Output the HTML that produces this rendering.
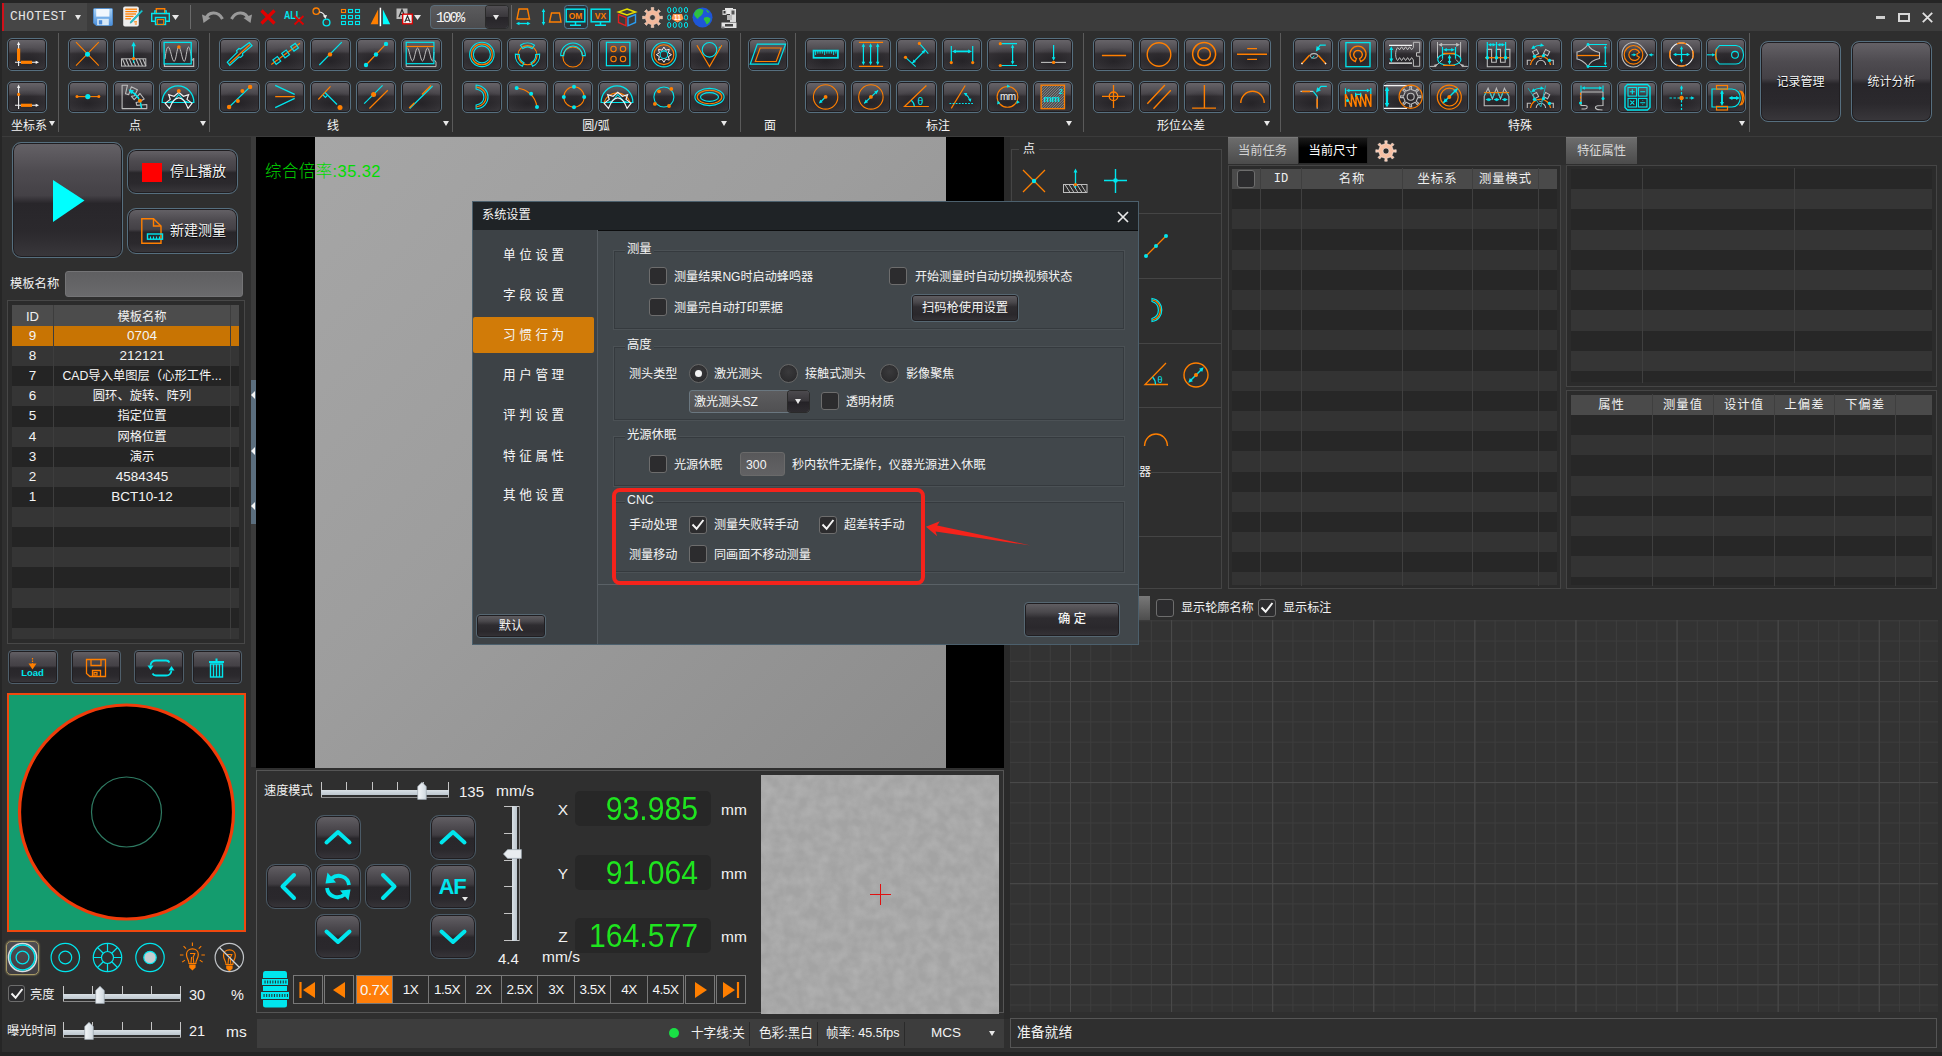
<!DOCTYPE html>
<html lang="zh-CN"><head><meta charset="utf-8"><title>CHOTEST</title>
<style>
*{box-sizing:border-box;margin:0;padding:0}
html,body{width:1942px;height:1056px;overflow:hidden;background:#2e2e2e}
body{font-family:"Liberation Sans","Noto Sans CJK SC",sans-serif;color:#eee;font-size:12px;line-height:1}
#app{position:relative;width:1942px;height:1056px;overflow:hidden;background:#2f2f2f}
.a,.rb,.bb,.t,.cb,.rd,.sep,.row{position:absolute}
.t{white-space:nowrap;color:#f0f0f0}
svg{display:block;overflow:visible}
/* ribbon button */
.rb{width:41px;height:33px;border:1px solid #566f7f;border-radius:5px;
 background:radial-gradient(ellipse 60% 45% at 50% 72%,rgba(20,18,22,.45),rgba(20,18,22,0) 100%),linear-gradient(#69666b 0%,#59565b 20%,#48454a 40%,#343135 48%,#333135 70%,#3b393d 100%);
 box-shadow:inset 0 0 0 1px #201e21}
.rb svg{position:absolute;left:-1px;top:-1px;width:41px;height:33px}
/* bigger glossy buttons */
.bb{border:1px solid #566f7f;border-radius:8px;
 background:linear-gradient(#656267 0%,#4e4b50 25%,#444146 46%,#28262a 53%,#2b292d 78%,#39373b 100%);
 box-shadow:inset 0 0 0 1px #201e21}
.sep{width:1px;background:#5a5a5a}
.glab{position:absolute;top:119px;height:14px;font-size:12px;color:#f4f4f4;text-align:center;white-space:nowrap;line-height:14px}
.tri{position:absolute;width:0;height:0;border-left:4px solid transparent;border-right:4px solid transparent;border-top:6px solid #e8e8e8}
/* checkbox */
.cb{width:18px;height:18px;border:1px solid #6d6d6d;border-radius:3px;background:#2c2c2e}
.cb svg{position:absolute;left:0;top:0;width:16px;height:16px}
.rd{width:19px;height:19px;border:1px solid #666;border-radius:50%;background:radial-gradient(circle at 50% 40%,#3a3a3c,#262628)}
.rd.on::after{content:"";position:absolute;left:5px;top:5px;width:7px;height:7px;border-radius:50%;background:#f2f2f2}
/* tables */
.hd{position:absolute;background:#4c4c4c;color:#f0f0f0;text-align:center;white-space:nowrap}
.vl{position:absolute;width:1px;background:#444}
.fs{position:absolute;border:1px solid #353a3e;box-shadow:0 0 0 1px #4b5155}
.dt{font-size:12.5px;color:#f2f2f2}

</style></head>
<body>
<div id="app">
<div class="a" style="left:0px;top:0px;width:1942px;height:3px;background:#252525"></div>
<div class="a" style="left:0px;top:3px;width:1942px;height:28px;background:#3c3c3c"></div>
<div class="a" style="left:0px;top:3px;width:2px;height:1053px;background:#262626"></div>
<div class="a" style="left:2px;top:3px;width:85px;height:28px;background:#464646"></div>
<div class="a" style="left:2px;top:3px;width:2px;height:28px;background:#d0101a"></div>
<div class="t" style="left:10px;top:9px;font-size:13px;line-height:16px;height:16px;color:#e4e4e4;font-family:'Liberation Mono','DejaVu Sans Mono',monospace;letter-spacing:0.3px;">CHOTEST</div>
<div class="a" style="left:75px;top:15px;width:0;height:0;border-left:3.5px solid transparent;border-right:3.5px solid transparent;border-top:5px solid #e8e8e8"></div>
<svg class="a" style="left:93px;top:8px;" width="20" height="18" viewBox="0 0 20 18"><defs><linearGradient id="gsv" x1="0" y1="0" x2="0" y2="1"><stop offset="0" stop-color="#a9d2f5"/><stop offset="1" stop-color="#4a8fdc"/></linearGradient></defs><path d="M1.5 0.5 H18.5 Q19.5 0.5 19.5 1.5 V16.5 Q19.5 17.5 18.5 17.5 H3 L0.5 15 V1.5 Q0.5 0.5 1.5 0.5 Z" fill="url(#gsv)" stroke="#4d8fd6" stroke-width="0.8"/><rect x="3.2" y="1" width="13.2" height="7.6" fill="#f1f7fd"/><rect x="4.2" y="10.8" width="11.6" height="6.4" fill="#d6e8f6"/><rect x="5.8" y="12.2" width="3.4" height="4.2" fill="#4b8ad6"/></svg>
<svg class="a" style="left:123px;top:6px;" width="21" height="21" viewBox="0 0 21 21"><path d="M2 0.5 H14 Q15.8 0.5 15.8 2.3 V18.7 Q15.8 20.5 14 20.5 H2 Q0.2 20.5 0.2 18.7 V2.3 Q0.2 0.5 2 0.5 Z" fill="#ededed"/><path d="M2.3 3.2 H14" stroke="#ff7f00" stroke-width="1.3"/><path d="M2.3 5.6 H14" stroke="#ff7f00" stroke-width="1.3"/><path d="M2.3 8 H13" stroke="#ff7f00" stroke-width="1.3"/><path d="M2.3 10.4 H10.5" stroke="#ff7f00" stroke-width="1.3"/><path d="M2.3 12.8 H8" stroke="#ff7f00" stroke-width="1.3"/><path d="M11.2 15.8 H14 M11.8 18 H14" stroke="#ff7f00" stroke-width="1.2"/><path d="M7.6 15.6 L18.6 4 L19.8 5.2 L8.8 16.6 L7.2 17.2 Z" fill="#1fc4cc" stroke="#0e8f98" stroke-width="0.5"/></svg>
<svg class="a" style="left:151px;top:7px;" width="19" height="18" viewBox="0 0 19 18"><path d="M5.3 6.5 V1.7 H13.7 V6.5" stroke="#ff7f00" stroke-width="1.4" fill="none" /><path d="M3.8 6.5 V3.8 H5.3 M13.7 3.8 H15.2 V6.5" stroke="#00e6ee" stroke-width="1.3" fill="none" /><path d="M4.5 14.3 H0.7 V6.5 H18.3 V14.3 H14.5" stroke="#00e6ee" stroke-width="1.4" fill="none" /><rect x="4.5" y="10.5" width="10" height="7" stroke="#00e6ee" stroke-width="1.4" fill="none" /><rect x="6.3" y="12.6" width="6.4" height="4.9" stroke="#ff7f00" stroke-width="1" fill="none" /></svg>
<svg class="a" style="left:172px;top:15px;" width="7" height="5" viewBox="0 0 7 5"><path d="M0 0 H7 L3.5 5 Z" fill="#e8e8e8"/></svg>
<svg class="a" style="left:202px;top:10px;" width="22" height="14" viewBox="0 0 22 14"><path d="M3.5 9.5 C6 1.5 16 0.5 20.5 9" stroke="#9a9a9a" stroke-width="3" fill="none"/><path d="M0 4.5 L8.5 8 L1.5 13 Z" fill="#9a9a9a"/></svg>
<svg class="a" style="left:230px;top:10px;" width="22" height="14" viewBox="0 0 22 14"><g transform="translate(22 0) scale(-1 1)"><path d="M3.5 9.5 C6 1.5 16 0.5 20.5 9" stroke="#9a9a9a" stroke-width="3" fill="none"/><path d="M0 4.5 L8.5 8 L1.5 13 Z" fill="#9a9a9a"/></g></svg>
<svg class="a" style="left:260px;top:9px;" width="16" height="16" viewBox="0 0 16 16"><path d="M1.5 1.5 L14.5 14.5 M14.5 1.5 L1.5 14.5" stroke="#e00000" stroke-width="3.2" fill="none"/></svg>
<svg class="a" style="left:284px;top:8px;" width="21" height="18" viewBox="0 0 21 18"><text x="0" y="10.5" font-family="Liberation Sans,sans-serif" font-size="11.5" font-weight="bold" fill="#00e6ee" textLength="17" lengthAdjust="spacingAndGlyphs">ALL</text><path d="M10.5 8 L19.5 16.5 M19.5 8 L10.5 16.5" stroke="#e00000" stroke-width="1.8" fill="none"/></svg>
<svg class="a" style="left:312px;top:7px;" width="20" height="20" viewBox="0 0 20 20"><circle cx="4.2" cy="4.2" r="3.2" stroke="#ff7f00" stroke-width="1.3" fill="none"/><circle cx="14.5" cy="15.5" r="3.4" stroke="#00e6ee" stroke-width="1.4" fill="none"/><path d="M7.5 5 C11 5.5 12.5 7.5 13 10" stroke="#f0f0f0" stroke-width="1.1" fill="none"/><path d="M10.8 8.5 L13.5 12 L15 8 Z" fill="#f0f0f0"/></svg>
<svg class="a" style="left:341px;top:9px;" width="20" height="16" viewBox="0 0 20 16"><rect x="0.5" y="0.5" width="4" height="3" stroke="#ff7f00" stroke-width="1.1" fill="none" /><rect x="7.5" y="0.5" width="4" height="3" stroke="#00e6ee" stroke-width="1.1" fill="none" /><rect x="14.5" y="0.5" width="4" height="3" stroke="#00e6ee" stroke-width="1.1" fill="none" /><rect x="0.5" y="6.5" width="4" height="3" stroke="#00e6ee" stroke-width="1.1" fill="none" /><rect x="7.5" y="6.5" width="4" height="3" stroke="#00e6ee" stroke-width="1.1" fill="none" /><rect x="14.5" y="6.5" width="4" height="3" stroke="#00e6ee" stroke-width="1.1" fill="none" /><rect x="0.5" y="12.5" width="4" height="3" stroke="#00e6ee" stroke-width="1.1" fill="none" /><rect x="7.5" y="12.5" width="4" height="3" stroke="#00e6ee" stroke-width="1.1" fill="none" /><rect x="14.5" y="12.5" width="4" height="3" stroke="#00e6ee" stroke-width="1.1" fill="none" /></svg>
<svg class="a" style="left:370px;top:8px;" width="21" height="18" viewBox="0 0 21 18"><path d="M8.1 1.5 V16.2 H0.6 Z" fill="#ff7f00"/><path d="M12.9 1.5 V16.2 H20.2 Z" fill="#00ffff"/><path d="M10.4 -0.3 V18.2" stroke="#ffffff" stroke-width="1.5"/></svg>
<svg class="a" style="left:396px;top:8px;" width="19" height="17" viewBox="0 0 19 17"><rect x="0.5" y="0.5" width="11" height="10.5" fill="#bdbdbd"/><path d="M3 9 L6 1.5 L9 9 M4 6.5 H8" stroke="#2a2a2a" stroke-width="1.2" fill="none"/><rect x="6.7" y="6.2" width="9.6" height="9.6" fill="#f6f6f6" stroke="#e00000" stroke-width="1.3"/><path d="M8.8 14.3 L11.5 8 L14.2 14.3 M9.8 12.2 H13.2" stroke="#2a2a2a" stroke-width="1.1" fill="none"/></svg>
<svg class="a" style="left:414px;top:15px;" width="7" height="5" viewBox="0 0 7 5"><path d="M0 0 H7 L3.5 5 Z" fill="#e8e8e8"/></svg>
<svg class="a" style="left:516px;top:8px;" width="16" height="18" viewBox="0 0 16 18"><path d="M3 1 H11.5 L13.5 11 H1 Z" stroke="#ff7f00" stroke-width="1.4" fill="none" /><path d="M1.5 15.5 H13" stroke="#00e6ee" stroke-width="1.3" fill="none" /><path d="M0 0 L-3.4499999999999997 -1.7249999999999999 L-3.4499999999999997 1.7249999999999999 Z" fill="#00e6ee" transform="translate(0 15.5) rotate(180)"/><path d="M0 0 L-3.4499999999999997 -1.7249999999999999 L-3.4499999999999997 1.7249999999999999 Z" fill="#00e6ee" transform="translate(14.5 15.5) rotate(0)"/></svg>
<svg class="a" style="left:540px;top:8px;" width="22" height="18" viewBox="0 0 22 18"><path d="M3.5 3 V15" stroke="#00e6ee" stroke-width="1.3" fill="none" /><path d="M0 0 L-3.4499999999999997 -1.7249999999999999 L-3.4499999999999997 1.7249999999999999 Z" fill="#00e6ee" transform="translate(3.5 0.5) rotate(-90)"/><path d="M0 0 L-3.4499999999999997 -1.7249999999999999 L-3.4499999999999997 1.7249999999999999 Z" fill="#00e6ee" transform="translate(3.5 17.5) rotate(90)"/><path d="M11.5 5 H19.5 L21 14 H9.5 Z" stroke="#ff7f00" stroke-width="1.4" fill="none" /></svg>
<svg class="a" style="left:564px;top:5px;" width="24" height="24" viewBox="0 0 24 24"><rect x="0.5" y="0.5" width="23" height="23" rx="3" fill="#2a3238" stroke="#4f7d9a" stroke-width="1"/></svg>
<svg class="a" style="left:565px;top:8px;" width="21" height="18" viewBox="0 0 21 18"><rect x="1.2" y="1.2" width="18.6" height="12.6" stroke="#00e6ee" stroke-width="1.5" fill="none" /><path d="M10.5 14 V17 M5 17.3 H16" stroke="#00e6ee" stroke-width="1.5" fill="none" /><text x="10.5" y="11" text-anchor="middle" font-family="Liberation Sans,sans-serif" font-size="8.5" font-weight="bold" fill="#ff7f00">OM</text></svg>
<svg class="a" style="left:590px;top:8px;" width="21" height="18" viewBox="0 0 21 18"><rect x="1.2" y="1.2" width="18.6" height="12.6" stroke="#00e6ee" stroke-width="1.5" fill="none" /><path d="M10.5 14 V17 M5 17.3 H16" stroke="#00e6ee" stroke-width="1.5" fill="none" /><text x="10.5" y="11" text-anchor="middle" font-family="Liberation Sans,sans-serif" font-size="8.5" font-weight="bold" fill="#ff7f00">VX</text></svg>
<svg class="a" style="left:617px;top:8px;" width="20" height="19" viewBox="0 0 20 19"><path d="M10 1 L18.5 4 L10 7 L1.5 4 Z" stroke="#e8e000" stroke-width="1.5" fill="none" /><path d="M1.5 6.5 V14.5 L9 17.8 V9.5 Z" stroke="#e02020" stroke-width="1.4" fill="none" /><path d="M18.5 6.5 V14.5 L11 17.8 V9.5 Z" stroke="#2a9cf0" stroke-width="1.4" fill="none" /></svg>
<svg class="a" style="left:642px;top:7px;" width="21" height="21" viewBox="0 0 21 21"><path d="M20.4 9.1 L20.4 11.9 L17.7 11.5 L16.3 14.9 L18.5 16.5 L16.5 18.5 L14.9 16.3 L11.5 17.7 L11.9 20.4 L9.1 20.4 L9.5 17.7 L6.1 16.3 L4.5 18.5 L2.5 16.5 L4.7 14.9 L3.3 11.5 L0.6 11.9 L0.6 9.1 L3.3 9.5 L4.7 6.1 L2.5 4.5 L4.5 2.5 L6.1 4.7 L9.5 3.3 L9.1 0.6 L11.9 0.6 L11.5 3.3 L14.9 4.7 L16.5 2.5 L18.5 4.5 L16.3 6.1 L17.7 9.5 Z M13.3 10.5 A2.8 2.8 0 1 0 7.7 10.5 A2.8 2.8 0 1 0 13.3 10.5 Z" fill="#f4b99c" fill-rule="evenodd" stroke="#fde4d6" stroke-width="0.5"/></svg>
<svg class="a" style="left:667px;top:7px;" width="21" height="21" viewBox="0 0 21 21"><ellipse cx="2.2" cy="3.0" rx="1.6" ry="2.6" stroke="#00e6ee" stroke-width="1" fill="none"/><ellipse cx="7.8" cy="3.0" rx="1.6" ry="2.6" stroke="#00e6ee" stroke-width="1" fill="none"/><ellipse cx="13.399999999999999" cy="3.0" rx="1.6" ry="2.6" stroke="#00e6ee" stroke-width="1" fill="none"/><ellipse cx="18.999999999999996" cy="3.0" rx="1.6" ry="2.6" stroke="#00e6ee" stroke-width="1" fill="none"/><ellipse cx="2.2" cy="10.5" rx="1.6" ry="2.6" stroke="#00e6ee" stroke-width="1" fill="none"/><ellipse cx="18.999999999999996" cy="10.5" rx="1.6" ry="2.6" stroke="#00e6ee" stroke-width="1" fill="none"/><ellipse cx="2.2" cy="18.0" rx="1.6" ry="2.6" stroke="#00e6ee" stroke-width="1" fill="none"/><ellipse cx="7.8" cy="18.0" rx="1.6" ry="2.6" stroke="#00e6ee" stroke-width="1" fill="none"/><ellipse cx="13.399999999999999" cy="18.0" rx="1.6" ry="2.6" stroke="#00e6ee" stroke-width="1" fill="none"/><ellipse cx="18.999999999999996" cy="18.0" rx="1.6" ry="2.6" stroke="#00e6ee" stroke-width="1" fill="none"/><path d="M6 7 H15 L16.5 12 L10.5 15.5 L4.5 12 Z" fill="#ff9a50"/><text x="10.5" y="13.3" text-anchor="middle" font-family="Liberation Sans,sans-serif" font-size="6.5" font-weight="bold" fill="#fff">11</text></svg>
<svg class="a" style="left:692px;top:7px;" width="21" height="21" viewBox="0 0 21 21"><circle cx="10.5" cy="10.5" r="10" fill="#1e56d8"/><path d="M5 2.5 C8 1 10.5 2 11.5 3.5 C10.5 5 11.5 6.5 9.5 8 C8.5 10 6.5 9.5 6 12 C4.5 11 2.5 9.5 2 7 C2.5 5 3.5 3.5 5 2.5 Z" fill="#2fc040"/><path d="M12.5 10.5 C14.5 9.5 17 10 18.5 11.5 C18.5 14 17 16 15 17.5 C13.5 16 13.5 14.5 12.5 13.5 C11.5 12.5 11.5 11.5 12.5 10.5 Z" fill="#2fc040"/><path d="M14 3 C15.5 3 17 4.5 17.5 5.5 L15.5 5.5 Z" fill="#2fc040"/></svg>
<svg class="a" style="left:721px;top:7px;" width="17" height="22" viewBox="0 0 17 22"><rect x="4" y="1" width="8" height="6" fill="#e8e8e8"/><rect x="1.5" y="3" width="4" height="5" fill="#d0d0d0"/><rect x="2.5" y="4" width="2" height="2.5" fill="#333"/><rect x="9" y="2" width="6" height="13" fill="#dadada"/><rect x="10.5" y="3.5" width="3" height="4" fill="#555"/><rect x="6" y="8" width="5" height="5" fill="#b8b8b8"/><path d="M0.5 15.5 H15.5 V21 H0.5 Z" fill="#e4e4e4"/><rect x="4" y="17" width="8" height="2.5" fill="#444"/><rect x="0.5" y="19.5" width="3" height="2" fill="#888"/></svg>
<div class="a" style="left:430px;top:5px;width:79px;height:24px;border:1px solid #5a6d7a;border-radius:4px;background:linear-gradient(#5b5b5d,#4b4b4d)"></div>
<div class="a" style="left:486px;top:6px;width:22px;height:22px;border-radius:3px;background:linear-gradient(#504e52 0%,#39373b 49%,#262428 51%,#302e32 100%);box-shadow:0 0 0 1px #2a2a2a"></div>
<div class="a" style="left:493px;top:15px;width:0;height:0;border-left:3.5px solid transparent;border-right:3.5px solid transparent;border-top:5px solid #e8e8e8"></div>
<div class="t" style="left:436px;top:9px;font-size:14.5px;line-height:18px;height:18px;color:#f4f4f4;font-family:'Liberation Mono',monospace;letter-spacing:-1.9px;">100%</div>
<div class="a" style="left:511px;top:5px;width:1px;height:24px;background:#666"></div>
<div class="a" style="left:190px;top:5px;width:1px;height:24px;background:#6a6a6a"></div>
<div class="a" style="left:1876px;top:16px;width:9px;height:3px;background:#cfcfcf"></div>
<div class="a" style="left:1898px;top:13px;width:12px;height:9px;border:2px solid #d8d8d8"></div>
<svg class="a" style="left:1922px;top:12px;" width="11" height="11" viewBox="0 0 11 11"><path d="M0.8 0.8 L10.2 10.2 M10.2 0.8 L0.8 10.2" stroke="#e0e0e0" stroke-width="1.8" fill="none"/></svg>
<div class="a" style="left:2px;top:31px;width:1940px;height:105px;background:#2e2e2e"></div>
<div class="a" style="left:2px;top:136px;width:1940px;height:1px;background:#3b3b3b"></div>
<div class="rb" style="left:7px;top:38px;width:40px;height:33px"><svg viewBox="0 0 41 33"><path d="M11.6 6 V28 M8 24.3 H29.5" stroke="#f2f2f2" stroke-width="1.1" fill="none" /><path d="M0 0 L-3.3000000000000003 -1.6500000000000001 L-3.3000000000000003 1.6500000000000001 Z" fill="#f2f2f2" transform="translate(11.6 3.6) rotate(-90)"/><path d="M0 0 L-3.3000000000000003 -1.6500000000000001 L-3.3000000000000003 1.6500000000000001 Z" fill="#f2f2f2" transform="translate(32 24.3) rotate(0)"/><rect x="10" y="10.5" width="3.2" height="12.5" fill="#ff7f00"/><rect x="14" y="22.7" width="11" height="3.2" fill="#ff7f00"/></svg></div>
<div class="rb" style="left:7px;top:81px;width:40px;height:32px"><svg viewBox="0 0 41 33"><path d="M11.6 6 V28 M8 24.3 H29.5" stroke="#f2f2f2" stroke-width="1.1" fill="none" /><path d="M0 0 L-3.3000000000000003 -1.6500000000000001 L-3.3000000000000003 1.6500000000000001 Z" fill="#f2f2f2" transform="translate(11.6 3.6) rotate(-90)"/><path d="M0 0 L-3.3000000000000003 -1.6500000000000001 L-3.3000000000000003 1.6500000000000001 Z" fill="#f2f2f2" transform="translate(32 24.3) rotate(0)"/><circle cx="11.6" cy="13.4" r="1.6" fill="#ff7f00"/><rect x="14" y="22.7" width="11" height="3.2" fill="#ff7f00"/></svg></div>
<div class="rb" style="left:68px;top:38px;width:40px;height:33px"><svg viewBox="0 0 41 33"><path d="M8 4.2 L30.8 27.6 M30.8 4.2 L8 27.6" stroke="#ff7f00" stroke-width="1.1" fill="none" /><circle cx="19.5" cy="16.2" r="2.5" fill="#00e6ee"/></svg></div>
<div class="rb" style="left:68px;top:81px;width:40px;height:32px"><svg viewBox="0 0 41 33"><path d="M9 15.6 H30.8" stroke="#ff7f00" stroke-width="1.1" fill="none" /><circle cx="9" cy="15.6" r="1.5" fill="#ff7f00"/><circle cx="30.8" cy="15.6" r="1.5" fill="#ff7f00"/><circle cx="19.8" cy="15.6" r="2.6" fill="#00e6ee"/></svg></div>
<div class="rb" style="left:113px;top:38px;width:41px;height:33px"><svg viewBox="0 0 41 33"><rect x="8.5" y="20.8" width="24.3" height="7.3" stroke="#bdbdbd" stroke-width="1" fill="none" /><path d="M9.5 21 L12.5 28 M12.9 21 L15.9 28 M16.3 21 L19.3 28 M19.7 21 L22.7 28 M23.1 21 L26.1 28 M26.5 21 L29.5 28 M29.9 21 L32.9 28 " stroke="#bdbdbd" stroke-width="1.1" fill="none" /><path d="M20.6 7 V24.8" stroke="#00e6ee" stroke-width="1.3" fill="none" /><path d="M0 0 L-4.5 -2.25 L-4.5 2.25 Z" fill="#00e6ee" transform="translate(20.6 3.8) rotate(-90)"/><circle cx="20.6" cy="20.6" r="1.7" fill="#ff7f00"/></svg></div>
<div class="rb" style="left:113px;top:81px;width:41px;height:32px"><svg viewBox="0 0 41 33"><path d="M9.1 4.2 H14.5 L12.5 12.8 L15.7 13.6 L18.3 5.8 L24.4 8.7 L21.6 14.8 L18.4 15.4 L21.2 18.6 L27 12.5 L31.2 18 L26.2 20.8 L23.1 21.5 L23.8 24.4 L33.8 23.5 V27.6 H9.1 Z" stroke="#bdbdbd" stroke-width="1.1" fill="none" stroke-linejoin="round"/><path d="M17.6 10.2 C23 12.5 27.6 18 28.5 27" stroke="#00e6ee" stroke-width="1.6" fill="none" /><path d="M0 0 L-4.800000000000001 -2.4000000000000004 L-4.800000000000001 2.4000000000000004 Z" fill="#00e6ee" transform="translate(15.6 8.6) rotate(214)"/><circle cx="27" cy="19.8" r="2" fill="#ff7f00"/></svg></div>
<div class="rb" style="left:159px;top:38px;width:40px;height:33px"><svg viewBox="0 0 41 33"><path d="M5.4 26 V28.4 H34.7 V20.3" stroke="#bdbdbd" stroke-width="1.1" fill="none" /><path d="M6 21 C7 12 8 9 9.3 9 C11.3 9 13 23.4 15.1 23.4 C17.2 23.4 17.8 9 19.8 9 C21.8 9 23.2 23.4 25.2 23.4 C27.2 23.4 27.5 9 29.5 9 C31 9 32 17 33.2 22.5 L34.7 20.3" stroke="#bdbdbd" stroke-width="1" fill="none" /><rect x="5.1" y="4.4" width="27.1" height="21.5" stroke="#00e6ee" stroke-width="1.3" fill="none" /><circle cx="19.9" cy="9" r="1.8" fill="#ff7f00"/></svg></div>
<div class="rb" style="left:159px;top:81px;width:40px;height:32px"><svg viewBox="0 0 41 33"><path d="M3.1 21.5 A15.9 16.6 0 0 1 34.9 21.5 Z" stroke="#00e6ee" stroke-width="1.2" fill="none" /><path d="M9.5 21.5 L14.2 20 L19.8 13.6 L25.4 20 L30 21.5" stroke="#00e6ee" stroke-width="1.1" fill="none" /><path d="M10.5 27.4 L6.2 22.3 L11.2 18.4 L9.7 13.6 L15.1 15.3 L19.8 11.4 L24.4 15.3 L29.6 13.6 L28 18.4 L33 22.3 L29.1 27.4 C26.5 20.5 23.5 16.9 19.8 16.9 C16 16.9 13 20.5 10.5 27.4 Z" stroke="#f2f2f2" stroke-width="1.2" fill="none" /><circle cx="19.8" cy="9.9" r="1.9" fill="#ff7f00"/></svg></div>
<div class="rb" style="left:219px;top:38px;width:41px;height:33px"><svg viewBox="0 0 41 33"><path d="M8.3 24.2 L18.2 14.3 L17.6 12.6 L20 10.5 L21.5 11 L30.3 4.6 L33 7.6 L23.5 15.5 L23.8 17.3 L21.6 19.4 L20 19 L10.8 27.4 Z" stroke="#00e6ee" stroke-width="1.2" fill="none" /><path d="M10.5 25.5 L31 6.5" stroke="#ff7f00" stroke-width="1.1" fill="none" /></svg></div>
<div class="rb" style="left:219px;top:81px;width:41px;height:32px"><svg viewBox="0 0 41 33"><path d="M10.1 26 L31.1 5.9" stroke="#00e6ee" stroke-width="1.2" fill="none" /><circle cx="10.1" cy="26" r="2.2" fill="#ff7f00"/><circle cx="31.1" cy="5.9" r="2.2" fill="#ff7f00"/><circle cx="18.9" cy="20" r="2" fill="#ff7f00"/><circle cx="23.4" cy="9.9" r="2" fill="#ff7f00"/></svg></div>
<div class="rb" style="left:265px;top:38px;width:40px;height:33px"><svg viewBox="0 0 41 33"><path d="M6.3 26.5 L35 5.2" stroke="#ff7f00" stroke-width="1.1" fill="none" /><rect x="9.0" y="19.599999999999998" width="5.6" height="5.6" stroke="#00e6ee" stroke-width="1.2" fill="none" transform="rotate(-36 11.8 22.4)"/><rect x="17.8" y="13.100000000000001" width="5.6" height="5.6" stroke="#00e6ee" stroke-width="1.2" fill="none" transform="rotate(-36 20.6 15.9)"/><rect x="26.8" y="6.500000000000001" width="5.6" height="5.6" stroke="#00e6ee" stroke-width="1.2" fill="none" transform="rotate(-36 29.6 9.3)"/></svg></div>
<div class="rb" style="left:265px;top:81px;width:40px;height:32px"><svg viewBox="0 0 41 33"><path d="M10.2 4.4 L29.7 13.4 M10.2 26.6 L29.7 17.4" stroke="#00e6ee" stroke-width="1.2" fill="none" /><path d="M10.2 15.6 H29.7" stroke="#ff7f00" stroke-width="1.3" fill="none" /></svg></div>
<div class="rb" style="left:310px;top:38px;width:41px;height:33px"><svg viewBox="0 0 41 33"><path d="M9.3 27 L31.8 4.2" stroke="#00e6ee" stroke-width="1.2" fill="none" /><circle cx="20" cy="16.4" r="2.2" fill="#ff7f00"/></svg></div>
<div class="rb" style="left:310px;top:81px;width:41px;height:32px"><svg viewBox="0 0 41 33"><path d="M8.3 18.5 L20.5 5.3" stroke="#ff7f00" stroke-width="1.2" fill="none" /><path d="M15 11.5 L27 23.5" stroke="#00e6ee" stroke-width="1.2" fill="none" /><path d="M13 14 L15.4 16.4 L17.6 14.2" stroke="#00e6ee" stroke-width="1.1" fill="none" /><circle cx="30" cy="26.5" r="2.5" fill="#ff7f00"/></svg></div>
<div class="rb" style="left:356px;top:38px;width:40px;height:33px"><svg viewBox="0 0 41 33"><path d="M10 27 L30 5.9" stroke="#ff7f00" stroke-width="1.2" fill="none" /><circle cx="10" cy="27" r="2.2" fill="#00e6ee"/><circle cx="20" cy="16.5" r="2.2" fill="#00e6ee"/><circle cx="30" cy="5.9" r="2.2" fill="#00e6ee"/></svg></div>
<div class="rb" style="left:356px;top:81px;width:40px;height:32px"><svg viewBox="0 0 41 33"><path d="M8.2 22.6 L26.6 4.4" stroke="#00e6ee" stroke-width="1.2" fill="none" /><path d="M13.4 27.5 L31.8 9.2" stroke="#ff7f00" stroke-width="1.2" fill="none" /><circle cx="17.6" cy="13.4" r="2.5" fill="#ff7f00"/></svg></div>
<div class="rb" style="left:401px;top:38px;width:41px;height:33px"><svg viewBox="0 0 41 33"><path d="M5.2 26 V28.6 H35 V24 L33.5 22" stroke="#bdbdbd" stroke-width="1" fill="none" /><path d="M6.5 10 C8 10 9.5 23 11.5 23 C13.5 23 14.5 10 16.5 10 C18.5 10 19.5 23 21.5 23 C23.5 23 24.5 10 26.5 10 C28.5 10 29.5 23 31.5 23 C32.2 23 32.5 19 33 14" stroke="#bdbdbd" stroke-width="1" fill="none" /><rect x="5.2" y="4.3" width="27.7" height="21.4" stroke="#00e6ee" stroke-width="1.2" fill="none" /><path d="M5.2 8.5 H32.9" stroke="#ff7f00" stroke-width="1.2" fill="none" /></svg></div>
<div class="rb" style="left:401px;top:81px;width:41px;height:32px"><svg viewBox="0 0 41 33"><path d="M8.7 27.5 L31.6 5" stroke="#00e6ee" stroke-width="1.2" fill="none" /><path d="M8.2 27 L13.5 21.8 M21 13.6 L30 4.6" stroke="#ff7f00" stroke-width="1.4" fill="none" /></svg></div>
<div class="rb" style="left:462px;top:38px;width:40px;height:33px"><svg viewBox="0 0 41 33"><circle cx="19.9" cy="16.4" r="12.2" stroke="#00e6ee" stroke-width="1.1" fill="none"/><circle cx="19.9" cy="16.4" r="10.4" stroke="#ff7f00" stroke-width="1.1" fill="none"/><circle cx="19.9" cy="16.4" r="8.5" stroke="#00e6ee" stroke-width="1.1" fill="none"/></svg></div>
<div class="rb" style="left:462px;top:81px;width:40px;height:32px"><svg viewBox="0 0 41 33"><path d="M14.1 4 C30 5.5 30 26.5 14.1 27.9 V24 C24.5 22 24.5 10 14.1 8 Z" stroke="#00e6ee" stroke-width="1.1" fill="none" /><path d="M14.3 6 C27.3 8 27.3 24 14.3 26" stroke="#ff7f00" stroke-width="1.1" fill="none" /></svg></div>
<div class="rb" style="left:507px;top:38px;width:41px;height:33px"><svg viewBox="0 0 41 33"><circle cx="20.5" cy="17.2" r="9.6" stroke="#ff7f00" stroke-width="1.1" fill="none"/><path d="M13.50 7.21 A12.2 12.2 0 0 1 27.50 7.21 L25.20 10.48 A8.2 8.2 0 0 0 15.80 10.48 Z" stroke="#00e6ee" stroke-width="1.1" fill="none" /><path d="M32.65 16.14 A12.2 12.2 0 0 1 25.66 28.26 L23.97 24.63 A8.2 8.2 0 0 0 28.67 16.49 Z" stroke="#00e6ee" stroke-width="1.1" fill="none" /><path d="M15.34 28.26 A12.2 12.2 0 0 1 8.35 16.14 L12.33 16.49 A8.2 8.2 0 0 0 17.03 24.63 Z" stroke="#00e6ee" stroke-width="1.1" fill="none" /></svg></div>
<div class="rb" style="left:507px;top:81px;width:41px;height:32px"><svg viewBox="0 0 41 33"><path d="M9.7 7 C20 8 28.5 15 30 26.1" stroke="#ff7f00" stroke-width="1.1" fill="none" /><circle cx="9.7" cy="7" r="2" fill="#00e6ee"/><circle cx="24.1" cy="12.8" r="2" fill="#00e6ee"/><circle cx="30" cy="26.1" r="2" fill="#00e6ee"/></svg></div>
<div class="rb" style="left:553px;top:38px;width:40px;height:33px"><svg viewBox="0 0 41 33"><circle cx="19.9" cy="19" r="10" stroke="#ff7f00" stroke-width="1.1" fill="none"/><path d="M7.7 17.6 A12.3 12.6 0 0 1 32.3 17.6 H29.3 A9.3 9.6 0 0 0 10.7 17.6 Z" stroke="#00e6ee" stroke-width="1.1" fill="none" /></svg></div>
<div class="rb" style="left:553px;top:81px;width:40px;height:32px"><svg viewBox="0 0 41 33"><circle cx="21" cy="16" r="10.2" stroke="#ff7f00" stroke-width="1.1" fill="none"/><circle cx="21" cy="5.8" r="2" fill="#00e6ee"/><circle cx="21" cy="26.2" r="2" fill="#00e6ee"/><circle cx="10.8" cy="16" r="2" fill="#00e6ee"/><circle cx="31.2" cy="16" r="2" fill="#00e6ee"/></svg></div>
<div class="rb" style="left:598px;top:38px;width:41px;height:33px"><svg viewBox="0 0 41 33"><rect x="8.4" y="4.3" width="23.5" height="23.4" stroke="#00e6ee" stroke-width="1.2" fill="none" /><circle cx="15.5" cy="11" r="2.7" stroke="#ff7f00" stroke-width="1.1" fill="none"/><circle cx="25" cy="11" r="2.7" stroke="#ff7f00" stroke-width="1.1" fill="none"/><circle cx="15.5" cy="21" r="2.7" stroke="#ff7f00" stroke-width="1.1" fill="none"/><circle cx="25" cy="21" r="2.7" stroke="#ff7f00" stroke-width="1.1" fill="none"/></svg></div>
<div class="rb" style="left:598px;top:81px;width:41px;height:32px"><svg viewBox="0 0 41 33"><path d="M3.1 21.5 A15.9 16.6 0 0 1 34.9 21.5 Z" stroke="#00e6ee" stroke-width="1.2" fill="none" /><path d="M6 21.5 A13.9 14.4 0 0 1 32.2 21.5" stroke="#ff7f00" stroke-width="1.1" fill="none" /><path d="M9.5 21.5 L14.2 20 L19.8 13.6 L25.4 20 L30 21.5" stroke="#00e6ee" stroke-width="1.1" fill="none" /><path d="M10.5 27.4 L6.2 22.3 L11.2 18.4 L9.7 13.6 L15.1 15.3 L19.8 11.4 L24.4 15.3 L29.6 13.6 L28 18.4 L33 22.3 L29.1 27.4 C26.5 20.5 23.5 16.9 19.8 16.9 C16 16.9 13 20.5 10.5 27.4 Z" stroke="#f2f2f2" stroke-width="1.2" fill="none" /></svg></div>
<div class="rb" style="left:644px;top:38px;width:40px;height:33px"><svg viewBox="0 0 41 33"><circle cx="19.9" cy="16.7" r="12.2" stroke="#00e6ee" stroke-width="1.1" fill="none"/><circle cx="19.9" cy="16.7" r="9.9" stroke="#ff7f00" stroke-width="1.1" fill="none"/><path d="M19.90 9.10 L21.78 12.17 L25.27 11.33 L24.43 14.82 L27.50 16.70 L24.43 18.58 L25.27 22.07 L21.78 21.23 L19.90 24.30 L18.02 21.23 L14.53 22.07 L15.37 18.58 L12.30 16.70 L15.37 14.82 L14.53 11.33 L18.02 12.17 Z" stroke="#f2f2f2" stroke-width="1" fill="none" /><circle cx="19.9" cy="16.7" r="3.8" stroke="#00e6ee" stroke-width="1.1" fill="none"/></svg></div>
<div class="rb" style="left:644px;top:81px;width:40px;height:32px"><svg viewBox="0 0 41 33"><circle cx="19.9" cy="16" r="10" stroke="#00e6ee" stroke-width="1.1" fill="none"/><circle cx="15" cy="10.3" r="1.9" fill="#ff7f00"/><circle cx="27.3" cy="7.9" r="1.9" fill="#ff7f00"/><circle cx="10.9" cy="22.9" r="1.9" fill="#ff7f00"/><circle cx="25" cy="25" r="1.9" fill="#ff7f00"/></svg></div>
<div class="rb" style="left:689px;top:38px;width:41px;height:33px"><svg viewBox="0 0 41 33"><path d="M7.9 7.3 L20.5 28.6 L32.8 7.3" stroke="#ff7f00" stroke-width="1.2" fill="none" /><circle cx="20.5" cy="11.8" r="7.3" stroke="#00e6ee" stroke-width="1.1" fill="none"/><path d="M29.5 10 L31.5 8.5" stroke="#00e6ee" stroke-width="1" fill="none" /></svg></div>
<div class="rb" style="left:689px;top:81px;width:41px;height:32px"><svg viewBox="0 0 41 33"><ellipse cx="20.5" cy="16" rx="14.6" ry="8.6" stroke="#00e6ee" stroke-width="1.1" fill="none"/><ellipse cx="20.5" cy="16" rx="12.3" ry="6.7" stroke="#ff7f00" stroke-width="1.1" fill="none"/><ellipse cx="20.5" cy="16" rx="9" ry="4.4" stroke="#00e6ee" stroke-width="1.1" fill="none"/></svg></div>
<div class="rb" style="left:748px;top:38px;width:40px;height:33px"><svg viewBox="0 0 41 33"><path d="M2.2 26.2 L9.3 6.1 H37.6 L30.3 26.2 Z" stroke="#00e6ee" stroke-width="1.2" fill="none" /><path d="M7.3 23.5 L12.1 10 H33.2 L28.2 23.5 Z" stroke="#ff7f00" stroke-width="1.2" fill="none" /></svg></div>
<div class="rb" style="left:805px;top:38px;width:41px;height:33px"><svg viewBox="0 0 41 33"><rect x="8.5" y="12.6" width="24.4" height="7.2" stroke="#00e6ee" stroke-width="1.7" fill="none" /><path d="M10.60 13 V17 M12.85 13 V15.6 M15.10 13 V15.6 M17.35 13 V15.6 M19.60 13 V17 M21.85 13 V15.6 M24.10 13 V15.6 M26.35 13 V15.6 M28.60 13 V17 M30.85 13 V15.6" stroke="#00e6ee" stroke-width="0.9" fill="none" /></svg></div>
<div class="rb" style="left:805px;top:81px;width:41px;height:32px"><svg viewBox="0 0 41 33"><circle cx="20.6" cy="15.9" r="12.2" stroke="#ff7f00" stroke-width="1.1" fill="none"/><path d="M20.6 15.9 L15.8 20.7" stroke="#00e6ee" stroke-width="1.3" fill="none" /><path d="M0 0 L-3.5999999999999996 -1.7999999999999998 L-3.5999999999999996 1.7999999999999998 Z" fill="#00e6ee" transform="translate(13.9 22.6) rotate(135)"/><circle cx="20.6" cy="15.9" r="1.9" fill="#ff7f00"/></svg></div>
<div class="rb" style="left:851px;top:38px;width:40px;height:33px"><svg viewBox="0 0 41 33"><path d="M7.9 4.3 H32.1 M7.9 28.3 H32.1" stroke="#ff7f00" stroke-width="1.2" fill="none" /><path d="M12.4 7.3 V25.3" stroke="#00e6ee" stroke-width="1.2" fill="none" /><path d="M0 0 L-3.4499999999999997 -1.7249999999999999 L-3.4499999999999997 1.7249999999999999 Z" fill="#00e6ee" transform="translate(12.4 5.3) rotate(-90)"/><path d="M0 0 L-3.4499999999999997 -1.7249999999999999 L-3.4499999999999997 1.7249999999999999 Z" fill="#00e6ee" transform="translate(12.4 27.3) rotate(90)"/><path d="M19.6 7.3 V25.3" stroke="#00e6ee" stroke-width="1.2" fill="none" /><path d="M0 0 L-3.4499999999999997 -1.7249999999999999 L-3.4499999999999997 1.7249999999999999 Z" fill="#00e6ee" transform="translate(19.6 5.3) rotate(-90)"/><path d="M0 0 L-3.4499999999999997 -1.7249999999999999 L-3.4499999999999997 1.7249999999999999 Z" fill="#00e6ee" transform="translate(19.6 27.3) rotate(90)"/><path d="M26.7 7.3 V25.3" stroke="#00e6ee" stroke-width="1.2" fill="none" /><path d="M0 0 L-3.4499999999999997 -1.7249999999999999 L-3.4499999999999997 1.7249999999999999 Z" fill="#00e6ee" transform="translate(26.7 5.3) rotate(-90)"/><path d="M0 0 L-3.4499999999999997 -1.7249999999999999 L-3.4499999999999997 1.7249999999999999 Z" fill="#00e6ee" transform="translate(26.7 27.3) rotate(90)"/></svg></div>
<div class="rb" style="left:851px;top:81px;width:40px;height:32px"><svg viewBox="0 0 41 33"><circle cx="19.9" cy="15.9" r="12.2" stroke="#ff7f00" stroke-width="1.1" fill="none"/><path d="M13.2 22.4 L27 9.4" stroke="#00e6ee" stroke-width="1.3" fill="none" /><path d="M0 0 L-3.5999999999999996 -1.7999999999999998 L-3.5999999999999996 1.7999999999999998 Z" fill="#00e6ee" transform="translate(13.2 22.4) rotate(136.70981404414152)"/><path d="M0 0 L-3.5999999999999996 -1.7999999999999998 L-3.5999999999999996 1.7999999999999998 Z" fill="#00e6ee" transform="translate(27 9.4) rotate(-43.29018595585846)"/><circle cx="19.9" cy="15.9" r="1.9" fill="#ff7f00"/></svg></div>
<div class="rb" style="left:896px;top:38px;width:41px;height:33px"><svg viewBox="0 0 41 33"><path d="M23.4 5.4 L32.3 15.6 M9.5 19.3 L19.7 28.6" stroke="#00e6ee" stroke-width="1.1" fill="none" /><path d="M16.3 25.2 L29.3 12" stroke="#00e6ee" stroke-width="1.2" fill="none" /><path d="M0 0 L-3.4499999999999997 -1.7249999999999999 L-3.4499999999999997 1.7249999999999999 Z" fill="#00e6ee" transform="translate(16.3 25.2) rotate(134.56263613247927)"/><path d="M0 0 L-3.4499999999999997 -1.7249999999999999 L-3.4499999999999997 1.7249999999999999 Z" fill="#00e6ee" transform="translate(29.3 12) rotate(-45.43736386752073)"/><circle cx="23.4" cy="5.4" r="1.6" fill="#ff7f00"/><circle cx="9.5" cy="19.3" r="1.6" fill="#ff7f00"/></svg></div>
<div class="rb" style="left:896px;top:81px;width:41px;height:32px"><svg viewBox="0 0 41 33"><path d="M30.4 4.5 L8.5 25.5 H32.9" stroke="#ff7f00" stroke-width="1.2" fill="none" /><path d="M15.2 19.3 C17.3 21 18.3 23 18.4 25.5" stroke="#00e6ee" stroke-width="1.1" fill="none" /><text x="21.5" y="24" font-family="Liberation Sans,sans-serif" font-size="10.5" fill="#00e6ee">θ</text></svg></div>
<div class="rb" style="left:942px;top:38px;width:40px;height:33px"><svg viewBox="0 0 41 33"><path d="M9.3 8 V24.5 M30.7 8 V24.5" stroke="#00e6ee" stroke-width="1.2" fill="none" /><path d="M12 13.4 H28" stroke="#00e6ee" stroke-width="1.8" fill="none" /><path d="M0 0 L-3.9000000000000004 -1.9500000000000002 L-3.9000000000000004 1.9500000000000002 Z" fill="#00e6ee" transform="translate(10 13.4) rotate(180)"/><path d="M0 0 L-3.9000000000000004 -1.9500000000000002 L-3.9000000000000004 1.9500000000000002 Z" fill="#00e6ee" transform="translate(30 13.4) rotate(0)"/><circle cx="9.3" cy="24.6" r="1.6" fill="#ff7f00"/><circle cx="30.7" cy="24.6" r="1.6" fill="#ff7f00"/></svg></div>
<div class="rb" style="left:942px;top:81px;width:40px;height:32px"><svg viewBox="0 0 41 33"><path d="M9.3 27.4 L23.2 4.5" stroke="#ff7f00" stroke-width="1.2" fill="none" /><path d="M7.5 22.5 H32" stroke="#00e6ee" stroke-width="1.1" fill="none" stroke-dasharray="1.8 1.3"/><path d="M23 12.8 C25.5 14.5 27.3 16.8 28.2 19.6" stroke="#00e6ee" stroke-width="1.1" fill="none" /><path d="M0 0 L-3.3000000000000003 -1.6500000000000001 L-3.3000000000000003 1.6500000000000001 Z" fill="#00e6ee" transform="translate(21.6 12) rotate(205)"/><path d="M0 0 L-3.3000000000000003 -1.6500000000000001 L-3.3000000000000003 1.6500000000000001 Z" fill="#00e6ee" transform="translate(28.6 21) rotate(75)"/></svg></div>
<div class="rb" style="left:987px;top:38px;width:41px;height:33px"><svg viewBox="0 0 41 33"><path d="M13.3 5.7 H30 M13.3 27.5 H30" stroke="#00e6ee" stroke-width="1.2" fill="none" /><path d="M25.6 8.4 V24.8" stroke="#00e6ee" stroke-width="1.2" fill="none" /><path d="M0 0 L-3.4499999999999997 -1.7249999999999999 L-3.4499999999999997 1.7249999999999999 Z" fill="#00e6ee" transform="translate(25.6 6.4) rotate(-90)"/><path d="M0 0 L-3.4499999999999997 -1.7249999999999999 L-3.4499999999999997 1.7249999999999999 Z" fill="#00e6ee" transform="translate(25.6 26.8) rotate(90)"/><circle cx="13.3" cy="5.7" r="1.6" fill="#ff7f00"/><circle cx="13.3" cy="27.5" r="1.6" fill="#ff7f00"/></svg></div>
<div class="rb" style="left:987px;top:81px;width:41px;height:32px"><svg viewBox="0 0 41 33"><circle cx="20.5" cy="15.9" r="10.4" stroke="#ff7f00" stroke-width="1.1" fill="none"/><rect x="12" y="11.5" width="17.5" height="8" fill="#333135"/><text x="20.7" y="19" text-anchor="middle" font-family="Liberation Sans,sans-serif" font-size="10" fill="#f2f2f2" letter-spacing="-0.6">mm</text><path d="M0 0 L-3.4499999999999997 -1.7249999999999999 L-3.4499999999999997 1.7249999999999999 Z" fill="#00e6ee" transform="translate(23.4 5.6) rotate(8)"/><path d="M0 0 L-3.4499999999999997 -1.7249999999999999 L-3.4499999999999997 1.7249999999999999 Z" fill="#00e6ee" transform="translate(10.6 19.6) rotate(250)"/><path d="M0 0 L-3.4499999999999997 -1.7249999999999999 L-3.4499999999999997 1.7249999999999999 Z" fill="#00e6ee" transform="translate(29.3 23) rotate(128)"/></svg></div>
<div class="rb" style="left:1033px;top:38px;width:40px;height:33px"><svg viewBox="0 0 41 33"><path d="M8 24.4 H33" stroke="#bdbdbd" stroke-width="1.1" fill="none" /><path d="M20.6 7 V20" stroke="#00e6ee" stroke-width="1.2" fill="none" /><path d="M0 0 L-3.5999999999999996 -1.7999999999999998 L-3.5999999999999996 1.7999999999999998 Z" fill="#00e6ee" transform="translate(20.6 22.8) rotate(90)"/><circle cx="20.6" cy="24.4" r="1.7" fill="#ff7f00"/></svg></div>
<div class="rb" style="left:1033px;top:81px;width:40px;height:32px"><svg viewBox="0 0 41 33"><rect x="8.1" y="4.2" width="23.4" height="23.5" fill="#4a4a4c"/><path d="M8.1 6.8 L10.7 4.2 M8.1 9.4 L13.3 4.2 M8.1 12.0 L15.9 4.2 M8.1 14.6 L18.5 4.2 M8.1 17.2 L21.1 4.2 M8.1 19.8 L23.7 4.2 M8.1 22.4 L26.3 4.2 M8.1 25.0 L28.9 4.2 M8.1 27.6 L31.5 4.2 M10.6 27.7 L31.6 6.7 M13.2 27.7 L31.6 9.3 M15.8 27.7 L31.6 11.9 M18.4 27.7 L31.6 14.5 M21.0 27.7 L31.6 17.1 M23.6 27.7 L31.6 19.7 M26.2 27.7 L31.6 22.3 M28.8 27.7 L31.6 24.9" stroke="#9a9a9a" stroke-width="0.8" fill="none" /><rect x="8.1" y="4.2" width="23.4" height="23.5" stroke="#ff7f00" stroke-width="1.3" fill="none" /><text x="18.5" y="21" text-anchor="middle" font-family="Liberation Sans,sans-serif" font-size="9.5" font-weight="bold" fill="#00e6ee" letter-spacing="-0.5">mm</text><text x="28" y="13" text-anchor="middle" font-family="Liberation Sans,sans-serif" font-size="7" font-weight="bold" fill="#00e6ee">2</text></svg></div>
<div class="rb" style="left:1093px;top:38px;width:41px;height:33px"><svg viewBox="0 0 41 33"><path d="M8.9 17.5 H33.1" stroke="#ff7f00" stroke-width="1.5" fill="none" /></svg></div>
<div class="rb" style="left:1093px;top:81px;width:41px;height:32px"><svg viewBox="0 0 41 33"><path d="M9 15.3 H32 M20.5 4 V27" stroke="#ff7f00" stroke-width="1.3" fill="none" /><circle cx="20.5" cy="15.3" r="4.3" stroke="#ff7f00" stroke-width="1.3" fill="none"/></svg></div>
<div class="rb" style="left:1139px;top:38px;width:40px;height:33px"><svg viewBox="0 0 41 33"><circle cx="20" cy="16.5" r="11.8" stroke="#ff7f00" stroke-width="1.4" fill="none"/></svg></div>
<div class="rb" style="left:1139px;top:81px;width:40px;height:32px"><svg viewBox="0 0 41 33"><path d="M8.3 22.7 L25.9 4.1 M14.5 27.7 L31.8 9.2" stroke="#ff7f00" stroke-width="1.4" fill="none" /></svg></div>
<div class="rb" style="left:1184px;top:38px;width:41px;height:33px"><svg viewBox="0 0 41 33"><circle cx="20.1" cy="16" r="11.5" stroke="#ff7f00" stroke-width="1.5" fill="none"/><circle cx="20.1" cy="16" r="6.3" stroke="#ff7f00" stroke-width="1.5" fill="none"/></svg></div>
<div class="rb" style="left:1184px;top:81px;width:41px;height:32px"><svg viewBox="0 0 41 33"><path d="M20.4 4 V27.1 M8.1 27.1 H32" stroke="#ff7f00" stroke-width="1.4" fill="none" /></svg></div>
<div class="rb" style="left:1231px;top:38px;width:40px;height:33px"><svg viewBox="0 0 41 33"><path d="M16.2 10.6 H26 M6 16.3 H36 M16.2 21.4 H26" stroke="#ff7f00" stroke-width="1.4" fill="none" /></svg></div>
<div class="rb" style="left:1231px;top:81px;width:40px;height:32px"><svg viewBox="0 0 41 33"><path d="M9.8 22 A11.7 11.7 0 0 1 33.2 22" stroke="#ff7f00" stroke-width="1.4" fill="none" /></svg></div>
<div class="rb" style="left:1293px;top:38px;width:40px;height:33px"><svg viewBox="0 0 41 33"><path d="M16.7 17.1 C18.5 14.8 23.3 14.8 25.2 17.2" stroke="#bdbdbd" stroke-width="1" fill="none" /><ellipse cx="21" cy="18" rx="3.6" ry="2.3" stroke="#bdbdbd" stroke-width="0.9" fill="none"/><path d="M21.3 17.8 L18.8 20.6" stroke="#00e6ee" stroke-width="1" fill="none" /><path d="M8.5 26 L16.7 17.1 M33 26 L25.2 17.2" stroke="#ff7f00" stroke-width="1.5" fill="none" /><path d="M8.5 26 L9.4 25 M33 26 L32.1 25" stroke="#f2f2f2" stroke-width="1.5" fill="none" /><path d="M32.8 7.2 H27.2 L24.3 11.2" stroke="#00e6ee" stroke-width="1.2" fill="none" /><path d="M0 0 L-4.800000000000001 -2.4000000000000004 L-4.800000000000001 2.4000000000000004 Z" fill="#00e6ee" transform="translate(22.8 13.4) rotate(126)"/></svg></div>
<div class="rb" style="left:1293px;top:81px;width:40px;height:32px"><svg viewBox="0 0 41 33"><path d="M7.4 10.4 H20.2 M24.2 15.3 V27.8" stroke="#bdbdbd" stroke-width="1.2" fill="none" /><path d="M9 10.4 H17 M24.2 17.7 V26.6" stroke="#ff7f00" stroke-width="1.5" fill="none" /><path d="M20.2 10.4 L24.2 15.3" stroke="#00e6ee" stroke-width="1.2" fill="none" /><path d="M33.8 5.4 H28 L24.6 9.4" stroke="#00e6ee" stroke-width="1.2" fill="none" /><path d="M0 0 L-4.800000000000001 -2.4000000000000004 L-4.800000000000001 2.4000000000000004 Z" fill="#00e6ee" transform="translate(23 11.4) rotate(129)"/></svg></div>
<div class="rb" style="left:1338px;top:38px;width:40px;height:33px"><svg viewBox="0 0 41 33"><rect x="7.9" y="4.6" width="24.1" height="24.1" stroke="#00e6ee" stroke-width="1.3" fill="none" /><path d="M17.3 23.6 A8 8 0 1 1 22.7 23.6 L21.6 20.6 A4.3 4.3 0 1 0 18.4 20.6 Z" stroke="#ff7f00" stroke-width="1.3" fill="none" /><path d="M18.2 12.6 H21.8" stroke="#ff7f00" stroke-width="1.2" fill="none" /></svg></div>
<div class="rb" style="left:1338px;top:81px;width:40px;height:32px"><svg viewBox="0 0 41 33"><path d="M7.5 25.8 V13 L13.4 25.8 V13 L18 25.8 V13 L22.7 25.8 V13 L27.7 25.8 V13 L32.8 25.8 V13" stroke="#ff7f00" stroke-width="1.5" fill="none" /><path d="M7.5 7.2 V13 M32.8 7.2 V13" stroke="#00e6ee" stroke-width="1.2" fill="none" /><path d="M10 9.5 H30.299999999999997" stroke="#00e6ee" stroke-width="1.2" fill="none" /><path d="M0 0 L-3.4499999999999997 -1.7249999999999999 L-3.4499999999999997 1.7249999999999999 Z" fill="#00e6ee" transform="translate(8 9.5) rotate(180)"/><path d="M0 0 L-3.4499999999999997 -1.7249999999999999 L-3.4499999999999997 1.7249999999999999 Z" fill="#00e6ee" transform="translate(32.3 9.5) rotate(0)"/><path d="M17.6 11.8 V15.7 M22.7 11.8 V15.7 M17.6 13.4 H22.7" stroke="#00e6ee" stroke-width="1.1" fill="none" /><circle cx="9.5" cy="19.6" r="1.5" fill="#00e6ee"/></svg></div>
<div class="rb" style="left:1383px;top:38px;width:41px;height:33px"><svg viewBox="0 0 41 33"><path d="M6 7.4 H29 M6 25.2 H29" stroke="#f2f2f2" stroke-width="1.3" fill="none" /><path d="M8.3 10.2 V22.4" stroke="#00e6ee" stroke-width="1.3" fill="none" /><path d="M0 0 L-3.9000000000000004 -1.9500000000000002 L-3.9000000000000004 1.9500000000000002 Z" fill="#00e6ee" transform="translate(8.3 8.2) rotate(-90)"/><path d="M0 0 L-3.9000000000000004 -1.9500000000000002 L-3.9000000000000004 1.9500000000000002 Z" fill="#00e6ee" transform="translate(8.3 24.4) rotate(90)"/><path d="M30.4 4.3 H36.7 V14.7 H33.5 V18.2 H36.7 V28.3 H30.4 V22 L28.6 19.6 L26.6 22.6 L24.6 19.6 L22.6 22.6 L20.6 19.6 L18.6 22.6 L16.6 19.6 L14.6 22.6 C12 20 12 12.5 14.6 9.6 L16.6 11.8 L18.6 8.8 L20.6 11.8 L22.6 8.8 L24.6 11.8 L26.6 8.8 L28.6 11.8 L30.4 9.6 Z" stroke="#bdbdbd" stroke-width="1" fill="none" /></svg></div>
<div class="rb" style="left:1383px;top:81px;width:41px;height:32px"><svg viewBox="0 0 41 33"><path d="M0.9 4.6 H24 M0.9 27.4 H24" stroke="#f2f2f2" stroke-width="1.4" fill="none" /><path d="M4 7.4 V24.6" stroke="#00e6ee" stroke-width="2.2" fill="none" /><path d="M0 0 L-4.5 -2.25 L-4.5 2.25 Z" fill="#00e6ee" transform="translate(4 5.4) rotate(-90)"/><path d="M0 0 L-4.5 -2.25 L-4.5 2.25 Z" fill="#00e6ee" transform="translate(4 26.6) rotate(90)"/><path d="M37.9 14.7 L37.9 16.7 L34.9 16.4 L33.3 20.3 L35.6 22.2 L34.2 23.6 L32.3 21.3 L28.4 22.9 L28.7 25.9 L26.7 25.9 L27.0 22.9 L23.1 21.3 L21.2 23.6 L19.8 22.2 L22.1 20.3 L20.5 16.4 L17.5 16.7 L17.5 14.7 L20.5 15.0 L22.1 11.1 L19.8 9.2 L21.2 7.8 L23.1 10.1 L27.0 8.5 L26.7 5.5 L28.7 5.5 L28.4 8.5 L32.3 10.1 L34.2 7.8 L35.6 9.2 L33.3 11.1 L34.9 15.0 Z" stroke="#bdbdbd" stroke-width="1.1" fill="none" stroke-linejoin="round"/><circle cx="27.7" cy="15.7" r="3.5" stroke="#bdbdbd" stroke-width="1.1" fill="none"/><circle cx="27.7" cy="15.7" r="11.6" stroke="#ff7f00" stroke-width="1.2" fill="none"/></svg></div>
<div class="rb" style="left:1429px;top:38px;width:40px;height:33px"><svg viewBox="0 0 41 33"><path d="M8.5 4 V20.3 M31.6 4 V20.3 M0.9 28.4 H6.3 L13.7 21.5 M38.9 28.4 H33.5 L26.9 21.5" stroke="#bdbdbd" stroke-width="1" fill="none" /><path d="M11.2 6.7 H29" stroke="#bdbdbd" stroke-width="1" fill="none" /><path d="M0 0 L-3.9000000000000004 -1.9500000000000002 L-3.9000000000000004 1.9500000000000002 Z" fill="#bdbdbd" transform="translate(9.2 6.7) rotate(180)"/><path d="M0 0 L-3.9000000000000004 -1.9500000000000002 L-3.9000000000000004 1.9500000000000002 Z" fill="#bdbdbd" transform="translate(31 6.7) rotate(0)"/><path d="M0 0 L-3.3000000000000003 -1.6500000000000001 L-3.3000000000000003 1.6500000000000001 Z" fill="#bdbdbd" transform="translate(8.2 25.9) rotate(-43)"/><path d="M0 0 L-3.3000000000000003 -1.6500000000000001 L-3.3000000000000003 1.6500000000000001 Z" fill="#bdbdbd" transform="translate(31.8 25.9) rotate(223)"/><ellipse cx="20.3" cy="21.5" rx="11.6" ry="6" stroke="#00e6ee" stroke-width="1.1" fill="none"/><path d="M13.5 9 V20.7 M26.5 9 V20.7" stroke="#00e6ee" stroke-width="1.2" fill="none" /><path d="M16.2 11.8 H23.8" stroke="#00e6ee" stroke-width="1.2" fill="none" /><path d="M0 0 L-3.5999999999999996 -1.7999999999999998 L-3.5999999999999996 1.7999999999999998 Z" fill="#00e6ee" transform="translate(14.2 11.8) rotate(180)"/><path d="M0 0 L-3.5999999999999996 -1.7999999999999998 L-3.5999999999999996 1.7999999999999998 Z" fill="#00e6ee" transform="translate(25.8 11.8) rotate(0)"/><path d="M14.1 15.5 H26.1 M14.1 27.4 H26.1" stroke="#ff7f00" stroke-width="1.3" fill="none" /><path d="M20.5 18.6 V24.7" stroke="#00e6ee" stroke-width="1.3" fill="none" /><path d="M0 0 L-3.5999999999999996 -1.7999999999999998 L-3.5999999999999996 1.7999999999999998 Z" fill="#00e6ee" transform="translate(20.5 16.6) rotate(-90)"/><path d="M0 0 L-3.5999999999999996 -1.7999999999999998 L-3.5999999999999996 1.7999999999999998 Z" fill="#00e6ee" transform="translate(20.5 26.7) rotate(90)"/></svg></div>
<div class="rb" style="left:1429px;top:81px;width:40px;height:32px"><svg viewBox="0 0 41 33"><circle cx="20.3" cy="16.1" r="12" stroke="#ff7f00" stroke-width="1.2" fill="none"/><circle cx="20.3" cy="16.1" r="8.9" stroke="#ff7f00" stroke-width="1.2" fill="none"/><path d="M14.3 21.8 L28.6 7.5" stroke="#00e6ee" stroke-width="1.4" fill="none" /><path d="M0 0 L-4.199999999999999 -2.0999999999999996 L-4.199999999999999 2.0999999999999996 Z" fill="#00e6ee" transform="translate(14.3 21.8) rotate(135.0)"/><path d="M0 0 L-4.199999999999999 -2.0999999999999996 L-4.199999999999999 2.0999999999999996 Z" fill="#00e6ee" transform="translate(28.6 7.5) rotate(-45.0)"/><circle cx="20.3" cy="16.1" r="2" fill="#ff7f00"/></svg></div>
<div class="rb" style="left:1476px;top:38px;width:41px;height:33px"><svg viewBox="0 0 41 33"><path d="M11.3 11.4 V28.7 H33.9 V11.4 H29.2 V24.2 H24.5 V11.4 H20.3 V24.2 H15.6 V11.4 Z" stroke="#bdbdbd" stroke-width="1.1" fill="none" /><path d="M11.3 4 V19.5 M20.5 4 V19.5 M29.6 4 V19.5" stroke="#00e6ee" stroke-width="1.2" fill="none" /><path d="M13.8 6.7 H18" stroke="#00e6ee" stroke-width="1.2" fill="none" /><path d="M0 0 L-3.4499999999999997 -1.7249999999999999 L-3.4499999999999997 1.7249999999999999 Z" fill="#00e6ee" transform="translate(11.8 6.7) rotate(180)"/><path d="M0 0 L-3.4499999999999997 -1.7249999999999999 L-3.4499999999999997 1.7249999999999999 Z" fill="#00e6ee" transform="translate(20 6.7) rotate(0)"/><path d="M23 6.7 H27.1" stroke="#00e6ee" stroke-width="1.2" fill="none" /><path d="M0 0 L-3.4499999999999997 -1.7249999999999999 L-3.4499999999999997 1.7249999999999999 Z" fill="#00e6ee" transform="translate(21 6.7) rotate(180)"/><path d="M0 0 L-3.4499999999999997 -1.7249999999999999 L-3.4499999999999997 1.7249999999999999 Z" fill="#00e6ee" transform="translate(29.1 6.7) rotate(0)"/><path d="M9 19.7 H33.1" stroke="#ff7f00" stroke-width="1.3" fill="none" /><circle cx="11.3" cy="19.7" r="1.7" fill="#00e6ee"/><circle cx="20.5" cy="19.7" r="1.7" fill="#00e6ee"/><circle cx="29.6" cy="19.7" r="1.7" fill="#00e6ee"/></svg></div>
<div class="rb" style="left:1476px;top:81px;width:41px;height:32px"><svg viewBox="0 0 41 33"><path d="M8.2 24.7 V15.3 L12.1 7.2 L16.4 17.7 L20.4 7.2 L24.5 17.7 L28.4 7.2 L32.9 15.3 V24.7 Z" stroke="#bdbdbd" stroke-width="1.1" fill="none" /><path d="M8.1 11.6 H33.1" stroke="#ff7f00" stroke-width="1.3" fill="none" /><path d="M10 11.6 L8.6 14.5 M14 11.6 L16 16.5 M18.8 11.6 L16.9 16.5 M22 11.6 L24 16.5 M26.8 11.6 L25 16.5 M30.8 11.6 L32.4 14.5" stroke="#18c4cc" stroke-width="1" fill="none" /><path d="M11.4 18.6 H14" stroke="#00e6ee" stroke-width="1.2" fill="none" /><path d="M0 0 L-3.3000000000000003 -1.6500000000000001 L-3.3000000000000003 1.6500000000000001 Z" fill="#00e6ee" transform="translate(9.4 18.6) rotate(180)"/><path d="M0 0 L-3.3000000000000003 -1.6500000000000001 L-3.3000000000000003 1.6500000000000001 Z" fill="#00e6ee" transform="translate(16 18.6) rotate(0)"/><path d="M19.5 18.6 H21.8" stroke="#00e6ee" stroke-width="1.2" fill="none" /><path d="M0 0 L-3.3000000000000003 -1.6500000000000001 L-3.3000000000000003 1.6500000000000001 Z" fill="#00e6ee" transform="translate(17.5 18.6) rotate(180)"/><path d="M0 0 L-3.3000000000000003 -1.6500000000000001 L-3.3000000000000003 1.6500000000000001 Z" fill="#00e6ee" transform="translate(23.8 18.6) rotate(0)"/><path d="M27.7 18.6 H29.9" stroke="#00e6ee" stroke-width="1.2" fill="none" /><path d="M0 0 L-3.3000000000000003 -1.6500000000000001 L-3.3000000000000003 1.6500000000000001 Z" fill="#00e6ee" transform="translate(25.7 18.6) rotate(180)"/><path d="M0 0 L-3.3000000000000003 -1.6500000000000001 L-3.3000000000000003 1.6500000000000001 Z" fill="#00e6ee" transform="translate(31.9 18.6) rotate(0)"/></svg></div>
<div class="rb" style="left:1522px;top:38px;width:40px;height:33px"><svg viewBox="0 0 41 33"><path d="M5.3 27 V22.2 H9 M31.3 27 V22.2 H27.6" stroke="#bdbdbd" stroke-width="1.1" fill="none" /><path d="M14.2 27 A4.7 4.7 0 0 1 23.6 27" stroke="#bdbdbd" stroke-width="1.1" fill="none" /><rect x="11.3" y="12.3" width="4.6" height="4.6" stroke="#bdbdbd" stroke-width="1" fill="none" transform="rotate(-28 13.6 14.6)"/><rect x="22.3" y="12.3" width="4.6" height="4.6" stroke="#bdbdbd" stroke-width="1" fill="none" transform="rotate(28 24.6 14.6)"/><path d="M17 19.5 L18.5 21 L20 19.5" stroke="#bdbdbd" stroke-width="1" fill="none" /><path d="M8.4 27 A10.2 10.2 0 0 1 28.6 27" stroke="#ff7f00" stroke-width="1.3" fill="none" /><path d="M11 9.8 C14 7.6 17.5 7 20 7.4" stroke="#00e6ee" stroke-width="1.2" fill="none" /><path d="M0 0 L-3.75 -1.875 L-3.75 1.875 Z" fill="#00e6ee" transform="translate(9.3 11) rotate(145)"/><path d="M0 0 L-3.75 -1.875 L-3.75 1.875 Z" fill="#00e6ee" transform="translate(22.2 7.8) rotate(12)"/><circle cx="12.5" cy="18.4" r="1.7" fill="#00e6ee"/><circle cx="21.5" cy="17.6" r="1.7" fill="#00e6ee"/><circle cx="27.4" cy="22.4" r="1.7" fill="#00e6ee"/></svg></div>
<div class="rb" style="left:1522px;top:81px;width:40px;height:32px"><svg viewBox="0 0 41 33"><path d="M5.3 27 V22.2 H9 M31.3 27 V22.2 H27.6" stroke="#bdbdbd" stroke-width="1.1" fill="none" /><path d="M14.2 27 A4.7 4.7 0 0 1 23.6 27" stroke="#bdbdbd" stroke-width="1.1" fill="none" /><rect x="11.3" y="12.3" width="4.6" height="4.6" stroke="#bdbdbd" stroke-width="1" fill="none" transform="rotate(-28 13.6 14.6)"/><rect x="22.3" y="12.3" width="4.6" height="4.6" stroke="#bdbdbd" stroke-width="1" fill="none" transform="rotate(28 24.6 14.6)"/><path d="M17 19.5 L18.5 21 L20 19.5" stroke="#bdbdbd" stroke-width="1" fill="none" /><path d="M8.4 27 A10.2 10.2 0 0 1 28.6 27" stroke="#ff7f00" stroke-width="1.3" fill="none" /><path d="M11 9.8 C14 7.6 17.5 7 20 7.4" stroke="#00e6ee" stroke-width="1.2" fill="none" /><path d="M0 0 L-3.75 -1.875 L-3.75 1.875 Z" fill="#00e6ee" transform="translate(9.3 11) rotate(145)"/><path d="M0 0 L-3.75 -1.875 L-3.75 1.875 Z" fill="#00e6ee" transform="translate(22.2 7.8) rotate(12)"/><path d="M6.1 7.2 L18.9 25.8 L23.6 4.5" stroke="#18b4bc" stroke-width="1" fill="none" /><circle cx="12.5" cy="18.4" r="1.7" fill="#00e6ee"/><circle cx="21.5" cy="17.6" r="1.7" fill="#00e6ee"/><circle cx="27.4" cy="22.4" r="1.7" fill="#00e6ee"/></svg></div>
<div class="rb" style="left:1571px;top:38px;width:41px;height:33px"><svg viewBox="0 0 41 33"><path d="M17 6.5 C18.5 10 21.5 13 28.5 14.5 V20.5 C21.5 22 18.5 25 17 28.5 C13 23 8 21 6 21 V14 C8 14 13 12 17 6.5 Z" stroke="#bdbdbd" stroke-width="1.1" fill="none" /><path d="M6 17.5 H28" stroke="#ff7f00" stroke-width="1.3" fill="none" /><path d="M17 6.5 H36 M17 28.5 H36" stroke="#00e6ee" stroke-width="1.1" fill="none" /><path d="M34.3 9.2 V25.8" stroke="#00e6ee" stroke-width="1.1" fill="none" /><path d="M0 0 L-3.0 -1.5 L-3.0 1.5 Z" fill="#00e6ee" transform="translate(34.3 7.2) rotate(-90)"/><path d="M0 0 L-3.0 -1.5 L-3.0 1.5 Z" fill="#00e6ee" transform="translate(34.3 27.8) rotate(90)"/><circle cx="17" cy="6.5" r="1.4" fill="#00e6ee"/><circle cx="17" cy="28.5" r="1.4" fill="#00e6ee"/></svg></div>
<div class="rb" style="left:1571px;top:81px;width:41px;height:32px"><svg viewBox="0 0 41 33"><path d="M10 4.5 V11 M32 4.5 V11" stroke="#00e6ee" stroke-width="1.1" fill="none" /><path d="M12.5 7 H29.5" stroke="#00e6ee" stroke-width="1.2" fill="none" /><path d="M0 0 L-3.3000000000000003 -1.6500000000000001 L-3.3000000000000003 1.6500000000000001 Z" fill="#00e6ee" transform="translate(10.5 7) rotate(180)"/><path d="M0 0 L-3.3000000000000003 -1.6500000000000001 L-3.3000000000000003 1.6500000000000001 Z" fill="#00e6ee" transform="translate(31.5 7) rotate(0)"/><path d="M10 11 V24.5 H14 C17 24.5 17 27.5 14 28 H10.5 M32 11 V24.5 C28 24.5 24 24.5 24.5 27 C25 29 28 28.5 31.5 29 M10 11 H32" stroke="#bdbdbd" stroke-width="1.1" fill="none" /><path d="M9.5 12 V24" stroke="#ff7f00" stroke-width="1.1" fill="none" stroke-dasharray="2 1.5"/><circle cx="9.5" cy="22" r="1.5" fill="#00e6ee"/><circle cx="32" cy="17.5" r="1.5" fill="#00e6ee"/></svg></div>
<div class="rb" style="left:1617px;top:38px;width:40px;height:33px"><svg viewBox="0 0 41 33"><path d="M16.5 4.5 C24 4.5 28 12 30.5 17 C28 22 24 29 16.5 29 C9.5 29 5 23.5 5 16.8 C5 10 9.5 4.5 16.5 4.5 Z" stroke="#bdbdbd" stroke-width="1.1" fill="none" /><circle cx="16.5" cy="16.8" r="9.3" stroke="#ff7f00" stroke-width="1.2" fill="none"/><path d="M22.5 14.5 A5.6 5.6 0 1 0 22.5 19.2 L20 17.8 L20 15.8 Z" stroke="#ff7f00" stroke-width="1.2" fill="none" /><path d="M14.5 16.8 H18" stroke="#00e6ee" stroke-width="1.1" fill="none" /><path d="M0 0 L-3.0 -1.5 L-3.0 1.5 Z" fill="#00e6ee" transform="translate(19.5 16.8) rotate(0)"/><path d="M36.5 16.8 H34" stroke="#00e6ee" stroke-width="1.1" fill="none" /><path d="M0 0 L-3.3000000000000003 -1.6500000000000001 L-3.3000000000000003 1.6500000000000001 Z" fill="#00e6ee" transform="translate(31.5 16.8) rotate(180)"/></svg></div>
<div class="rb" style="left:1617px;top:81px;width:40px;height:32px"><svg viewBox="0 0 41 33"><path d="M10.5 3.5 H30.5 L33 6 V26.5 L30.5 29 H10.5 L8 26.5 V6 Z" stroke="#00e6ee" stroke-width="1.4" fill="none" /><rect x="11" y="6.5" width="8.6" height="8.6" stroke="#00e6ee" stroke-width="1.1" fill="none" /><rect x="21.4" y="6.5" width="8.6" height="8.6" stroke="#00e6ee" stroke-width="1.1" fill="none" /><rect x="11" y="17.4" width="8.6" height="8.6" stroke="#00e6ee" stroke-width="1.1" fill="none" /><rect x="21.4" y="17.4" width="8.6" height="8.6" stroke="#00e6ee" stroke-width="1.1" fill="none" /><path d="M12.8 10.8 H17.8 M15.3 8.3 V13.3 M23.2 10.8 H28.2 M13.3 19.7 L17.3 23.7 M17.3 19.7 L13.3 23.7 M23.2 21.7 H28.2 M25.7 19.4 V20 M25.7 23.4 V24" stroke="#00e6ee" stroke-width="1.1" fill="none" /></svg></div>
<div class="rb" style="left:1661px;top:38px;width:41px;height:33px"><svg viewBox="0 0 41 33"><circle cx="20.5" cy="16.5" r="11.6" stroke="#f2f2f2" stroke-width="1.1" fill="none"/><path d="M16 5.8 A11.6 11.6 0 0 1 25 5.8 M16 27.2 A11.6 11.6 0 0 0 25 27.2" stroke="#ff7f00" stroke-width="1.4" fill="none" /><path d="M9.3 12.5 A11.6 11.6 0 0 0 9.3 20.5 M31.7 12.5 A11.6 11.6 0 0 1 31.7 20.5" stroke="#ff7f00" stroke-width="1.4" fill="none" /><path d="M14 16.5 H27" stroke="#00e6ee" stroke-width="1.2" fill="none" /><path d="M0 0 L-3.3000000000000003 -1.6500000000000001 L-3.3000000000000003 1.6500000000000001 Z" fill="#00e6ee" transform="translate(12 16.5) rotate(180)"/><path d="M0 0 L-3.3000000000000003 -1.6500000000000001 L-3.3000000000000003 1.6500000000000001 Z" fill="#00e6ee" transform="translate(29 16.5) rotate(0)"/><path d="M20.5 10 V23" stroke="#00e6ee" stroke-width="1.2" fill="none" /><path d="M0 0 L-3.3000000000000003 -1.6500000000000001 L-3.3000000000000003 1.6500000000000001 Z" fill="#00e6ee" transform="translate(20.5 8) rotate(-90)"/><path d="M0 0 L-3.3000000000000003 -1.6500000000000001 L-3.3000000000000003 1.6500000000000001 Z" fill="#00e6ee" transform="translate(20.5 25) rotate(90)"/></svg></div>
<div class="rb" style="left:1661px;top:81px;width:41px;height:32px"><svg viewBox="0 0 41 33"><path d="M8.5 17 H31 M20.5 7 V29" stroke="#00e6ee" stroke-width="1.2" fill="none" stroke-dasharray="2.4 1.6"/><path d="M0 0 L-3.3000000000000003 -1.6500000000000001 L-3.3000000000000003 1.6500000000000001 Z" fill="#00e6ee" transform="translate(33.5 17) rotate(0)"/><path d="M0 0 L-3.3000000000000003 -1.6500000000000001 L-3.3000000000000003 1.6500000000000001 Z" fill="#00e6ee" transform="translate(20.5 4.2) rotate(-90)"/><circle cx="20.5" cy="17" r="2.2" fill="#ff7f00"/></svg></div>
<div class="rb" style="left:1706px;top:38px;width:40px;height:33px"><svg viewBox="0 0 41 33"><path d="M13.5 7.5 H30 C40 8 40 25.5 30 26 H13.5 L10 22 V11.5 Z" stroke="#00e6ee" stroke-width="1.1" fill="none" /><circle cx="29" cy="16.8" r="3.4" stroke="#00e6ee" stroke-width="1.1" fill="none"/><path d="M1 16.8 H7" stroke="#00e6ee" stroke-width="1.1" fill="none" /><path d="M0 0 L-3.3000000000000003 -1.6500000000000001 L-3.3000000000000003 1.6500000000000001 Z" fill="#00e6ee" transform="translate(9.5 16.8) rotate(0)"/><path d="M11 11 C9.3 14.5 9.3 19 11 22.5" stroke="#ff7f00" stroke-width="1.3" fill="none" /></svg></div>
<div class="rb" style="left:1706px;top:81px;width:40px;height:32px"><svg viewBox="0 0 41 33"><path d="M6 8 H26 C37 8.5 37 25.5 26 26 H6 Z" stroke="#00e6ee" stroke-width="1.2" fill="none" /><rect x="10.5" y="4.5" width="11" height="3.6" stroke="#ff7f00" stroke-width="1.2" fill="none" /><rect x="10.5" y="25.4" width="11" height="3.6" stroke="#ff7f00" stroke-width="1.2" fill="none" /><path d="M16 10.8 V23" stroke="#00e6ee" stroke-width="1.9" fill="none" /><path d="M0 0 L-3.9000000000000004 -1.9500000000000002 L-3.9000000000000004 1.9500000000000002 Z" fill="#00e6ee" transform="translate(16 8.8) rotate(-90)"/><path d="M0 0 L-3.9000000000000004 -1.9500000000000002 L-3.9000000000000004 1.9500000000000002 Z" fill="#00e6ee" transform="translate(16 25) rotate(90)"/><path d="M24.5 17 H32" stroke="#00e6ee" stroke-width="1.9" fill="none" /><path d="M0 0 L-3.9000000000000004 -1.9500000000000002 L-3.9000000000000004 1.9500000000000002 Z" fill="#00e6ee" transform="translate(22.5 17) rotate(180)"/><path d="M0 0 L-3.9000000000000004 -1.9500000000000002 L-3.9000000000000004 1.9500000000000002 Z" fill="#00e6ee" transform="translate(34 17) rotate(0)"/><path d="M33.5 9.5 C37.5 13 37.5 21 33.5 24.5 M35.5 10 C39 13.5 39 20.5 35.5 24" stroke="#ff7f00" stroke-width="1.2" fill="none" /></svg></div>
<div class="sep" style="left:58px;top:33px;height:99px"></div>
<div class="sep" style="left:209px;top:33px;height:99px"></div>
<div class="sep" style="left:452px;top:33px;height:99px"></div>
<div class="sep" style="left:740px;top:33px;height:99px"></div>
<div class="sep" style="left:795px;top:33px;height:99px"></div>
<div class="sep" style="left:1083px;top:33px;height:99px"></div>
<div class="sep" style="left:1280px;top:33px;height:99px"></div>
<div class="sep" style="left:1749px;top:33px;height:99px"></div>
<div class="glab" style="left:-11px;width:80px">坐标系</div>
<div class="glab" style="left:95px;width:80px">点</div>
<div class="glab" style="left:293px;width:80px">线</div>
<div class="glab" style="left:556px;width:80px">圆/弧</div>
<div class="glab" style="left:730px;width:80px">面</div>
<div class="glab" style="left:898px;width:80px">标注</div>
<div class="glab" style="left:1141px;width:80px">形位公差</div>
<div class="glab" style="left:1480px;width:80px">特殊</div>
<div class="a" style="left:49px;top:121px;width:0;height:0;border-left:3.0px solid transparent;border-right:3.0px solid transparent;border-top:5px solid #e8e8e8"></div>
<div class="a" style="left:200px;top:121px;width:0;height:0;border-left:3.0px solid transparent;border-right:3.0px solid transparent;border-top:5px solid #e8e8e8"></div>
<div class="a" style="left:443px;top:121px;width:0;height:0;border-left:3.0px solid transparent;border-right:3.0px solid transparent;border-top:5px solid #e8e8e8"></div>
<div class="a" style="left:721px;top:121px;width:0;height:0;border-left:3.0px solid transparent;border-right:3.0px solid transparent;border-top:5px solid #e8e8e8"></div>
<div class="a" style="left:1066px;top:121px;width:0;height:0;border-left:3.0px solid transparent;border-right:3.0px solid transparent;border-top:5px solid #e8e8e8"></div>
<div class="a" style="left:1264px;top:121px;width:0;height:0;border-left:3.0px solid transparent;border-right:3.0px solid transparent;border-top:5px solid #e8e8e8"></div>
<div class="a" style="left:1739px;top:121px;width:0;height:0;border-left:3.0px solid transparent;border-right:3.0px solid transparent;border-top:5px solid #e8e8e8"></div>
<div class="bb" style="left:1760px;top:41px;width:81px;height:81px;"><div class="t" style="left:0;top:32px;width:79px;text-align:center;font-size:12px;line-height:16px;color:#f4f4f4;text-shadow:0 1px 1px #000">记录管理</div></div>
<div class="bb" style="left:1851px;top:41px;width:81px;height:81px;"><div class="t" style="left:0;top:32px;width:79px;text-align:center;font-size:12px;line-height:16px;color:#f4f4f4;text-shadow:0 1px 1px #000">统计分析</div></div>
<div class="a" style="left:2px;top:137px;width:249px;height:919px;background:#2f2f2f"></div>
<div class="a" style="left:251px;top:137px;width:5px;height:630px;background:#3b3b3b"></div>
<div class="a" style="left:251px;top:380px;width:5px;height:144px;background:#5b6e7e"></div>
<div class="a" style="left:251px;top:391px;width:0;height:0;border-top:4px solid transparent;border-bottom:4px solid transparent;border-right:4px solid #f4f4f4"></div>
<div class="a" style="left:251px;top:447px;width:0;height:0;border-top:4px solid transparent;border-bottom:4px solid transparent;border-right:4px solid #f4f4f4"></div>
<div class="a" style="left:251px;top:502px;width:0;height:0;border-top:4px solid transparent;border-bottom:4px solid transparent;border-right:4px solid #f4f4f4"></div>
<div class="bb" style="left:12px;top:142px;width:111px;height:116px;border-radius:9px"><svg class="a" style="left:40px;top:37px" width="32" height="42" viewBox="0 0 32 42"><path d="M0 0 L31.5 20.5 L0 42 Z" fill="#00ffff"/></svg></div>
<div class="bb" style="left:127px;top:149px;width:111px;height:45px;border-radius:9px"><div class="a" style="left:14px;top:13px;width:20px;height:19px;background:#ff0000"></div><div class="t" style="left:42px;top:12px;font-size:14px;line-height:18px;color:#f6f6f6;text-shadow:0 1px 1px #000">停止播放</div></div>
<div class="bb" style="left:127px;top:208px;width:111px;height:46px;border-radius:9px"><svg class="a" style="left:13px;top:9px;" width="24" height="28" viewBox="0 0 24 28"><path d="M0.8 0.8 H12.5 L20 8 V25.3 H0.8 Z" stroke="#ff7f00" stroke-width="1.4" fill="none" /><path d="M12.5 0.8 V8 H20" stroke="#ff7f00" stroke-width="1.4" fill="none" /><rect x="6.5" y="16" width="15" height="5.2" stroke="#00e6ee" stroke-width="1.4" fill="none" /><path d="M9.5 18.5 V21 M12.5 18.5 V21 M15.5 18.5 V21 M18.5 18.5 V21" stroke="#00e6ee" stroke-width="1.1" fill="none" /></svg><div class="t" style="left:42px;top:12px;font-size:14px;line-height:18px;color:#f6f6f6;text-shadow:0 1px 1px #000">新建测量</div></div>
<div class="t" style="left:10px;top:276px;font-size:12.3px;line-height:17px;height:17px;color:#f2f2f2;">模板名称</div>
<div class="a" style="left:65px;top:271px;width:178px;height:26px;border-radius:3px;background:linear-gradient(#5f5f61,#6a6a6c);border:1px solid #747476"></div>
<div class="a" style="left:7px;top:300px;width:238px;height:344px;border:1px solid #474747;background:#2b2b2b"></div>
<div class="a" style="left:12px;top:305px;width:227px;height:21px;background:#4c4c4c"></div>
<div class="t" style="left:12px;top:308px;font-size:13px;line-height:17px;height:17px;color:#f0f0f0;width:41px;text-align:center;">ID</div>
<div class="t" style="left:54px;top:309px;font-size:12.3px;line-height:17px;height:17px;color:#f0f0f0;width:176px;text-align:center;">模板名称</div>
<div class="a" style="left:12px;top:326px;width:227px;height:20px;background:#c87403"></div>
<div class="t" style="left:12px;top:327px;font-size:13.5px;line-height:18px;height:18px;color:#f4f4f4;width:41px;text-align:center;">9</div>
<div class="t" style="left:54px;top:327px;font-size:13.5px;line-height:18px;height:18px;color:#f4f4f4;width:176px;text-align:center;">0704</div>
<div class="a" style="left:12px;top:346px;width:227px;height:20px;background:#353535"></div>
<div class="t" style="left:12px;top:347px;font-size:13.5px;line-height:18px;height:18px;color:#f4f4f4;width:41px;text-align:center;">8</div>
<div class="t" style="left:54px;top:347px;font-size:13.5px;line-height:18px;height:18px;color:#f4f4f4;width:176px;text-align:center;">212121</div>
<div class="a" style="left:12px;top:366px;width:227px;height:20px;background:#242424"></div>
<div class="t" style="left:12px;top:367px;font-size:13.5px;line-height:18px;height:18px;color:#f4f4f4;width:41px;text-align:center;">7</div>
<div class="t" style="left:54px;top:367px;font-size:12.3px;line-height:18px;height:18px;color:#f4f4f4;width:176px;text-align:center;">CAD导入单图层（心形工件...</div>
<div class="a" style="left:12px;top:386px;width:227px;height:20px;background:#353535"></div>
<div class="t" style="left:12px;top:387px;font-size:13.5px;line-height:18px;height:18px;color:#f4f4f4;width:41px;text-align:center;">6</div>
<div class="t" style="left:54px;top:387px;font-size:12.3px;line-height:18px;height:18px;color:#f4f4f4;width:176px;text-align:center;">圆环、旋转、阵列</div>
<div class="a" style="left:12px;top:406px;width:227px;height:21px;background:#242424"></div>
<div class="t" style="left:12px;top:407px;font-size:13.5px;line-height:18px;height:18px;color:#f4f4f4;width:41px;text-align:center;">5</div>
<div class="t" style="left:54px;top:407px;font-size:12.3px;line-height:18px;height:18px;color:#f4f4f4;width:176px;text-align:center;">指定位置</div>
<div class="a" style="left:12px;top:427px;width:227px;height:20px;background:#353535"></div>
<div class="t" style="left:12px;top:428px;font-size:13.5px;line-height:18px;height:18px;color:#f4f4f4;width:41px;text-align:center;">4</div>
<div class="t" style="left:54px;top:428px;font-size:12.3px;line-height:18px;height:18px;color:#f4f4f4;width:176px;text-align:center;">网格位置</div>
<div class="a" style="left:12px;top:447px;width:227px;height:20px;background:#242424"></div>
<div class="t" style="left:12px;top:448px;font-size:13.5px;line-height:18px;height:18px;color:#f4f4f4;width:41px;text-align:center;">3</div>
<div class="t" style="left:54px;top:448px;font-size:12.3px;line-height:18px;height:18px;color:#f4f4f4;width:176px;text-align:center;">演示</div>
<div class="a" style="left:12px;top:467px;width:227px;height:20px;background:#353535"></div>
<div class="t" style="left:12px;top:468px;font-size:13.5px;line-height:18px;height:18px;color:#f4f4f4;width:41px;text-align:center;">2</div>
<div class="t" style="left:54px;top:468px;font-size:13.5px;line-height:18px;height:18px;color:#f4f4f4;width:176px;text-align:center;">4584345</div>
<div class="a" style="left:12px;top:487px;width:227px;height:20px;background:#242424"></div>
<div class="t" style="left:12px;top:488px;font-size:13.5px;line-height:18px;height:18px;color:#f4f4f4;width:41px;text-align:center;">1</div>
<div class="t" style="left:54px;top:488px;font-size:13.5px;line-height:18px;height:18px;color:#f4f4f4;width:176px;text-align:center;">BCT10-12</div>
<div class="a" style="left:12px;top:507px;width:227px;height:20px;background:#353535"></div>
<div class="a" style="left:12px;top:527px;width:227px;height:20px;background:#242424"></div>
<div class="a" style="left:12px;top:547px;width:227px;height:20px;background:#353535"></div>
<div class="a" style="left:12px;top:567px;width:227px;height:21px;background:#242424"></div>
<div class="a" style="left:12px;top:588px;width:227px;height:20px;background:#353535"></div>
<div class="a" style="left:12px;top:608px;width:227px;height:20px;background:#242424"></div>
<div class="a" style="left:12px;top:628px;width:227px;height:11px;background:#353535"></div>
<div class="a" style="left:53px;top:305px;width:1px;height:334px;background:#3d3d3d"></div>
<div class="a" style="left:230px;top:305px;width:1px;height:334px;background:#3d3d3d"></div>
<div class="bb" style="left:8px;top:650px;width:50px;height:34px;border-radius:4px;border-color:#4f5f6b;"><svg class="a" style="left:0px;top:0px;" width="48" height="32" viewBox="0 0 48 32"><path d="M23.5 7 V13" stroke="#ff7f00" stroke-width="1.2" stroke-dasharray="1.5 1"/><path d="M19.5 12.5 H27.5 L23.5 18.5 Z" fill="#ff7f00"/><text x="23.5" y="25" text-anchor="middle" font-family="Liberation Sans,sans-serif" font-size="9.5" font-weight="bold" fill="#00e6ee">Load</text></svg></div>
<div class="bb" style="left:71px;top:650px;width:50px;height:34px;border-radius:4px;border-color:#4f5f6b;"><svg class="a" style="left:0px;top:0px;" width="48" height="32" viewBox="0 0 48 32"><path d="M14.5 8.5 H33.5 V25.5 H18 L14.5 22.5 Z" stroke="#ff7f00" stroke-width="1.3" fill="none" /><path d="M19 8.5 V14.5 H29 V8.5" stroke="#ff7f00" stroke-width="1.3" fill="none" /><path d="M20.5 25.5 V19.5 H28.5 V25.5" stroke="#ff7f00" stroke-width="1.3" fill="none" /><rect x="22" y="21.5" width="3" height="2.5" stroke="#ff7f00" stroke-width="1.2" fill="none" /></svg></div>
<div class="bb" style="left:134px;top:650px;width:50px;height:34px;border-radius:4px;border-color:#4f5f6b;"><svg class="a" style="left:0px;top:0px;" width="48" height="32" viewBox="0 0 48 32"><path d="M15.5 14.5 C16 10.5 18 9.5 21 9.5 H31 C33 9.5 34 10.5 34.5 11.5" stroke="#00e6ee" stroke-width="1.8" fill="none" /><path d="M36.5 19.5 C36 23.5 34 24.5 31 24.5 H21 C19 24.5 18 23.5 17.5 22.5" stroke="#00e6ee" stroke-width="1.8" fill="none" /><path d="M12.5 14.5 H18.5 L15.5 19 Z" fill="#00e6ee"/><path d="M33.5 19.5 H39.5 L36.5 15 Z" fill="#00e6ee"/></svg></div>
<div class="bb" style="left:192px;top:650px;width:50px;height:34px;border-radius:4px;border-color:#4f5f6b;"><svg class="a" style="left:0px;top:0px;" width="48" height="32" viewBox="0 0 48 32"><path d="M16 11 H31" stroke="#00e6ee" stroke-width="2" fill="none" /><path d="M23.5 7.5 V10" stroke="#00e6ee" stroke-width="2" fill="none" /><rect x="17.5" y="13" width="12" height="13" stroke="#00e6ee" stroke-width="1.4" fill="none" /><path d="M20.5 13 V26 M23.5 13 V26 M26.5 13 V26" stroke="#00e6ee" stroke-width="1.3" fill="none" /></svg></div>
<div class="a" style="left:7px;top:693px;width:239px;height:239px;background:#149c6e;border:2px solid #f0480e"></div>
<svg class="a" style="left:7px;top:693px;" width="239" height="239" viewBox="0 0 239 239"><circle cx="119.5" cy="119" r="107" fill="#000" stroke="#f03c0a" stroke-width="3.2"/><circle cx="119.5" cy="119" r="35" fill="none" stroke="#2e7a62" stroke-width="1.2"/></svg>
<div class="a" style="left:6px;top:941px;width:33px;height:34px;border:1px solid #a89a66;border-radius:5px;background:linear-gradient(#504e52,#403e42);box-shadow:0 0 2px #c8b878"></div>
<svg class="a" style="left:6px;top:941px;" width="32" height="32" viewBox="0 0 32 32"><circle cx="16.5" cy="16.5" r="14" stroke="#d8dde0" stroke-width="1.6" fill="none"/><circle cx="16.5" cy="16.5" r="12.4" stroke="#00e6ee" stroke-width="1.5" fill="none"/><circle cx="16.5" cy="16.5" r="6.4" stroke="#00e6ee" stroke-width="1.3" fill="none"/></svg>
<svg class="a" style="left:49px;top:941px;" width="32" height="32" viewBox="0 0 32 32"><circle cx="16.3" cy="16.5" r="14.2" stroke="#00e6ee" stroke-width="1.2" fill="none"/><circle cx="16.3" cy="16.5" r="6.4" stroke="#00e6ee" stroke-width="1.2" fill="none"/></svg>
<svg class="a" style="left:91px;top:941px;" width="32" height="32" viewBox="0 0 32 32"><circle cx="16.5" cy="16.5" r="14.2" stroke="#00e6ee" stroke-width="1.2" fill="none"/><circle cx="16.5" cy="16.5" r="6" stroke="#00e6ee" stroke-width="1.2" fill="none"/><path d="M22.50 16.50 L30.70 16.50 M20.74 20.74 L26.54 26.54 M16.50 22.50 L16.50 30.70 M12.26 20.74 L6.46 26.54 M10.50 16.50 L2.30 16.50 M12.26 12.26 L6.46 6.46 M16.50 10.50 L16.50 2.30 M20.74 12.26 L26.54 6.46 " stroke="#00e6ee" stroke-width="1.2" fill="none" /></svg>
<svg class="a" style="left:134px;top:941px;" width="32" height="32" viewBox="0 0 32 32"><circle cx="16" cy="16.5" r="14.2" stroke="#00e6ee" stroke-width="1.2" fill="none"/><circle cx="16" cy="16.5" r="6.2" stroke="#00e6ee" stroke-width="1.2" fill="#c6ccd0"/></svg>
<svg class="a" style="left:176px;top:941px;" width="32" height="32" viewBox="0 0 32 32"><path d="M13 22.5 C13 19 10.5 17.5 10.5 13.5 C10.5 10 13 7.8 16.4 7.8 C19.8 7.8 22.3 10 22.3 13.5 C22.3 17.5 19.8 19 19.8 22.5 Z" stroke="#ff7f00" stroke-width="1.2" fill="none" /><path d="M14 12.5 H18.8 L17.2 16 L17.8 22 M15.6 16 L15 22" stroke="#ff7f00" stroke-width="1.1" fill="none" /><path d="M13.2 23.5 H19.6 V26.5 L16.4 29.5 L13.2 26.5 Z" fill="#ff7f00"/><path d="M16.40 5.00 L16.40 1.50 M22.76 7.64 L25.24 5.16 M10.04 7.64 L7.56 5.16 M25.40 14.00 L28.90 14.00 M7.40 14.00 L3.90 14.00 M23.77 19.16 L26.64 21.17 M9.03 19.16 L6.16 21.17 " stroke="#ff7f00" stroke-width="1.1" fill="none" /></svg>
<svg class="a" style="left:213px;top:941px;" width="32" height="32" viewBox="0 0 32 32"><g transform="translate(0 1)"><path d="M13 22.5 C13 19 10.5 17.5 10.5 13.5 C10.5 10 13 7.8 16.4 7.8 C19.8 7.8 22.3 10 22.3 13.5 C22.3 17.5 19.8 19 19.8 22.5 Z" stroke="#ff7f00" stroke-width="1.2" fill="none" /><path d="M14 12.5 H18.8 L17.2 16 L17.8 22 M15.6 16 L15 22" stroke="#ff7f00" stroke-width="1.1" fill="none" /><path d="M13.2 23.5 H19.6 V26.5 L16.4 29.5 L13.2 26.5 Z" fill="#ff7f00"/></g><circle cx="16.3" cy="16.5" r="14.2" stroke="#c0c4c8" stroke-width="1.2" fill="none"/><path d="M6.5 6.5 L26.5 26.5" stroke="#d0d4d8" stroke-width="1.3" fill="none" /></svg>
<div class="cb" style="left:8px;top:985px;width:17px;height:17px;"><svg viewBox="0 0 16 16"><path d="M3.2 8.2 L6.6 11.8 L12.8 3.8" fill="none" stroke="#f4f4f4" stroke-width="2" stroke-linecap="square"/></svg></div>
<div class="t" style="left:30px;top:987px;font-size:12.3px;line-height:17px;height:17px;color:#f2f2f2;">亮度</div>
<div class="a" style="left:63px;top:986px;width:1px;height:16px;background:#c4c4c4"></div><div class="a" style="left:92px;top:986px;width:1px;height:8px;background:#c4c4c4"></div><div class="a" style="left:122px;top:986px;width:1px;height:8px;background:#c4c4c4"></div><div class="a" style="left:151px;top:986px;width:1px;height:8px;background:#c4c4c4"></div><div class="a" style="left:180px;top:986px;width:1px;height:16px;background:#c4c4c4"></div><div class="a" style="left:63px;top:1001px;width:118px;height:1px;background:#8c8c8c"></div><div class="a" style="left:63px;top:994px;width:118px;height:5px;background:linear-gradient(#d9e0e5,#bcc6ce)"></div><svg class="a" style="left:95px;top:986px;" width="10" height="18" viewBox="0 0 10 18"><defs><linearGradient id="gth" x1="0" y1="0" x2="1" y2="0"><stop offset="0" stop-color="#f4f7f9"/><stop offset="1" stop-color="#cfd8df"/></linearGradient></defs><path d="M5 0.3 L9.3 4.5 L9.3 17.4 L0.7 17.4 L0.7 4.5 Z" fill="url(#gth)" stroke="#9aa4ac" stroke-width="0.7"/></svg>
<div class="t" style="left:189px;top:986px;font-size:14.5px;line-height:19px;height:19px;color:#f2f2f2;">30</div>
<div class="t" style="left:231px;top:986px;font-size:14.5px;line-height:19px;height:19px;color:#f2f2f2;">%</div>
<div class="t" style="left:7px;top:1023px;font-size:12.3px;line-height:17px;height:17px;color:#f2f2f2;">曝光时间</div>
<div class="a" style="left:63px;top:1022px;width:1px;height:16px;background:#c4c4c4"></div><div class="a" style="left:92px;top:1022px;width:1px;height:8px;background:#c4c4c4"></div><div class="a" style="left:122px;top:1022px;width:1px;height:8px;background:#c4c4c4"></div><div class="a" style="left:151px;top:1022px;width:1px;height:8px;background:#c4c4c4"></div><div class="a" style="left:180px;top:1022px;width:1px;height:16px;background:#c4c4c4"></div><div class="a" style="left:63px;top:1037px;width:118px;height:1px;background:#8c8c8c"></div><div class="a" style="left:63px;top:1030px;width:118px;height:5px;background:linear-gradient(#d9e0e5,#bcc6ce)"></div><svg class="a" style="left:84px;top:1022px;" width="10" height="18" viewBox="0 0 10 18"><defs><linearGradient id="gth" x1="0" y1="0" x2="1" y2="0"><stop offset="0" stop-color="#f4f7f9"/><stop offset="1" stop-color="#cfd8df"/></linearGradient></defs><path d="M5 0.3 L9.3 4.5 L9.3 17.4 L0.7 17.4 L0.7 4.5 Z" fill="url(#gth)" stroke="#9aa4ac" stroke-width="0.7"/></svg>
<div class="t" style="left:189px;top:1022px;font-size:14.5px;line-height:19px;height:19px;color:#f2f2f2;">21</div>
<div class="t" style="left:226px;top:1022px;font-size:15.5px;line-height:19px;height:19px;color:#f2f2f2;">ms</div>
<div class="a" style="left:256px;top:137px;width:748px;height:631px;background:#000"></div>
<div class="a" style="left:315px;top:137px;width:631px;height:631px;background:linear-gradient(135deg,#a6a6a6 0%,#9d9d9d 45%,#8c8c8c 100%)"></div>
<div class="t" style="left:265px;top:161px;font-size:16.5px;line-height:20px;height:20px;color:#00dc00;letter-spacing:0.4px;font-weight:300;">综合倍率:35.32</div>
<div class="a" style="left:1004px;top:137px;width:6px;height:882px;background:#2a2a2a"></div>
<div class="a" style="left:256px;top:770px;width:748px;height:243px;border:1px solid #555;background:#2f2f2f"></div>
<div class="t" style="left:264px;top:783px;font-size:12.2px;line-height:16px;height:16px;color:#f2f2f2;">速度模式</div>
<div class="a" style="left:321px;top:782px;width:1px;height:16px;background:#c4c4c4"></div><div class="a" style="left:346px;top:782px;width:1px;height:8px;background:#c4c4c4"></div><div class="a" style="left:372px;top:782px;width:1px;height:8px;background:#c4c4c4"></div><div class="a" style="left:397px;top:782px;width:1px;height:8px;background:#c4c4c4"></div><div class="a" style="left:423px;top:782px;width:1px;height:8px;background:#c4c4c4"></div><div class="a" style="left:448px;top:782px;width:1px;height:16px;background:#c4c4c4"></div><div class="a" style="left:321px;top:797px;width:128px;height:1px;background:#8c8c8c"></div><div class="a" style="left:321px;top:790px;width:128px;height:5px;background:linear-gradient(#d9e0e5,#bcc6ce)"></div><svg class="a" style="left:417px;top:782px;" width="10" height="18" viewBox="0 0 10 18"><defs><linearGradient id="gth" x1="0" y1="0" x2="1" y2="0"><stop offset="0" stop-color="#f4f7f9"/><stop offset="1" stop-color="#cfd8df"/></linearGradient></defs><path d="M5 0.3 L9.3 4.5 L9.3 17.4 L0.7 17.4 L0.7 4.5 Z" fill="url(#gth)" stroke="#9aa4ac" stroke-width="0.7"/></svg>
<div class="t" style="left:459px;top:782px;font-size:15px;line-height:19px;height:19px;color:#f2f2f2;">135</div>
<div class="t" style="left:496px;top:781px;font-size:15.5px;line-height:19px;height:19px;color:#f2f2f2;">mm/s</div>
<div class="bb" style="left:315px;top:815px;width:46px;height:45px;border-radius:9px;border-color:#4a5a66;background:linear-gradient(#636065 0%,#4c494e 28%,#403d42 44%,#29272b 52%,#2a282c 78%,#37353a 100%)"><svg class="a" style="left:0px;top:0px;" width="44" height="43" viewBox="0 0 44 43"><path d="M10.5 26.5 L22 16 L33.5 26.5" stroke="#00e6ee" stroke-width="4" fill="none" stroke-linecap="round" stroke-linejoin="round"/></svg></div>
<div class="bb" style="left:266px;top:864px;width:46px;height:45px;border-radius:9px;border-color:#4a5a66;background:linear-gradient(#636065 0%,#4c494e 28%,#403d42 44%,#29272b 52%,#2a282c 78%,#37353a 100%)"><svg class="a" style="left:0px;top:0px;" width="44" height="43" viewBox="0 0 44 43"><path d="M27 10 L15.5 21.5 L27 33" stroke="#00e6ee" stroke-width="4" fill="none" stroke-linecap="round" stroke-linejoin="round"/></svg></div>
<div class="bb" style="left:315px;top:864px;width:46px;height:45px;border-radius:9px;border-color:#4a5a66;background:linear-gradient(#636065 0%,#4c494e 28%,#403d42 44%,#29272b 52%,#2a282c 78%,#37353a 100%)"><svg class="a" style="left:0px;top:0px;" width="44" height="43" viewBox="0 0 44 43"><g transform="translate(44 0) scale(-1 1)"><path d="M11 20 C12 11.5 22 8 28.5 13.5" stroke="#00e6ee" stroke-width="3.8" fill="none" /><path d="M24 17.5 L34.5 18.5 L32.5 7.5 Z" fill="#00e6ee"/><path d="M33 23 C32 31.5 22 35 15.5 29.5" stroke="#00e6ee" stroke-width="3.8" fill="none" /><path d="M20 25.5 L9.5 24.5 L11.5 35.5 Z" fill="#00e6ee"/></g></svg></div>
<div class="bb" style="left:365px;top:864px;width:46px;height:45px;border-radius:9px;border-color:#4a5a66;background:linear-gradient(#636065 0%,#4c494e 28%,#403d42 44%,#29272b 52%,#2a282c 78%,#37353a 100%)"><svg class="a" style="left:0px;top:0px;" width="44" height="43" viewBox="0 0 44 43"><path d="M17 10 L28.5 21.5 L17 33" stroke="#00e6ee" stroke-width="4" fill="none" stroke-linecap="round" stroke-linejoin="round"/></svg></div>
<div class="bb" style="left:315px;top:914px;width:46px;height:45px;border-radius:9px;border-color:#4a5a66;background:linear-gradient(#636065 0%,#4c494e 28%,#403d42 44%,#29272b 52%,#2a282c 78%,#37353a 100%)"><svg class="a" style="left:0px;top:0px;" width="44" height="43" viewBox="0 0 44 43"><path d="M10.5 16.5 L22 27 L33.5 16.5" stroke="#00e6ee" stroke-width="4" fill="none" stroke-linecap="round" stroke-linejoin="round"/></svg></div>
<div class="bb" style="left:430px;top:815px;width:46px;height:45px;border-radius:9px;border-color:#4a5a66;background:linear-gradient(#636065 0%,#4c494e 28%,#403d42 44%,#29272b 52%,#2a282c 78%,#37353a 100%)"><svg class="a" style="left:0px;top:0px;" width="44" height="43" viewBox="0 0 44 43"><path d="M10.5 26.5 L22 16 L33.5 26.5" stroke="#00e6ee" stroke-width="4" fill="none" stroke-linecap="round" stroke-linejoin="round"/></svg></div>
<div class="bb" style="left:430px;top:864px;width:46px;height:45px;border-radius:9px;border-color:#4a5a66;background:linear-gradient(#636065 0%,#4c494e 28%,#403d42 44%,#29272b 52%,#2a282c 78%,#37353a 100%)"><svg class="a" style="left:0px;top:0px;" width="44" height="43" viewBox="0 0 44 43"><text x="21" y="29" text-anchor="middle" font-family="Liberation Sans,sans-serif" font-size="22" font-weight="bold" fill="#00e6ee" letter-spacing="-1.2">AF</text><path d="M31 32 H37 L34 36 Z" fill="#e8e8e8"/></svg></div>
<div class="bb" style="left:430px;top:914px;width:46px;height:45px;border-radius:9px;border-color:#4a5a66;background:linear-gradient(#636065 0%,#4c494e 28%,#403d42 44%,#29272b 52%,#2a282c 78%,#37353a 100%)"><svg class="a" style="left:0px;top:0px;" width="44" height="43" viewBox="0 0 44 43"><path d="M10.5 16.5 L22 27 L33.5 16.5" stroke="#00e6ee" stroke-width="4" fill="none" stroke-linecap="round" stroke-linejoin="round"/></svg></div>
<div class="a" style="left:504px;top:806px;width:16px;height:1px;background:#c4c4c4"></div>
<div class="a" style="left:504px;top:833px;width:8px;height:1px;background:#c4c4c4"></div>
<div class="a" style="left:504px;top:860px;width:8px;height:1px;background:#c4c4c4"></div>
<div class="a" style="left:504px;top:886px;width:8px;height:1px;background:#c4c4c4"></div>
<div class="a" style="left:504px;top:913px;width:8px;height:1px;background:#c4c4c4"></div>
<div class="a" style="left:504px;top:940px;width:16px;height:1px;background:#c4c4c4"></div>
<div class="a" style="left:519px;top:806px;width:1px;height:135px;background:#8c8c8c"></div>
<div class="a" style="left:512px;top:806px;width:5px;height:135px;background:linear-gradient(90deg,#d9e0e5,#bcc6ce)"></div>
<svg class="a" style="left:503px;top:849px;" width="19" height="10" viewBox="0 0 19 10"><path d="M0.4 5 L4.6 0.6 L18.4 0.6 L18.4 9.4 L4.6 9.4 Z" fill="#e9edf0" stroke="#9aa4ac" stroke-width="0.7"/></svg>
<div class="t" style="left:498px;top:949px;font-size:15px;line-height:19px;height:19px;color:#f2f2f2;">4.4</div>
<div class="t" style="left:542px;top:947px;font-size:15.5px;line-height:19px;height:19px;color:#f2f2f2;">mm/s</div>
<div class="a" style="left:575px;top:791px;width:136px;height:35px;background:#272727;border-radius:5px"></div>
<div class="t" style="left:555px;top:800px;font-size:15.5px;line-height:19px;height:19px;color:#f2f2f2;width:16px;text-align:center;">X</div>
<div class="t" style="left:575px;top:790px;font-size:33.5px;line-height:38px;height:38px;color:#1fe41f;width:136px;text-align:right;transform:scaleX(0.9);transform-origin:123px 50%;padding-right:13px;">93.985</div>
<div class="t" style="left:721px;top:800px;font-size:15.5px;line-height:19px;height:19px;color:#f2f2f2;">mm</div>
<div class="a" style="left:575px;top:855px;width:136px;height:35px;background:#272727;border-radius:5px"></div>
<div class="t" style="left:555px;top:864px;font-size:15.5px;line-height:19px;height:19px;color:#f2f2f2;width:16px;text-align:center;">Y</div>
<div class="t" style="left:575px;top:854px;font-size:33.5px;line-height:38px;height:38px;color:#1fe41f;width:136px;text-align:right;transform:scaleX(0.9);transform-origin:123px 50%;padding-right:13px;">91.064</div>
<div class="t" style="left:721px;top:864px;font-size:15.5px;line-height:19px;height:19px;color:#f2f2f2;">mm</div>
<div class="a" style="left:575px;top:918px;width:136px;height:35px;background:#272727;border-radius:5px"></div>
<div class="t" style="left:555px;top:927px;font-size:15.5px;line-height:19px;height:19px;color:#f2f2f2;width:16px;text-align:center;">Z</div>
<div class="t" style="left:575px;top:917px;font-size:33.5px;line-height:38px;height:38px;color:#1fe41f;width:136px;text-align:right;transform:scaleX(0.9);transform-origin:123px 50%;padding-right:13px;">164.577</div>
<div class="t" style="left:721px;top:927px;font-size:15.5px;line-height:19px;height:19px;color:#f2f2f2;">mm</div>
<svg class="a" style="left:261px;top:970px;" width="28" height="38" viewBox="0 0 28 38"><path d="M4 1 H24 Q26 1 26 3.5 V8 H2 V3.5 Q2 1 4 1 Z" fill="#00e6ee"/><rect x="1" y="9" width="26" height="6" fill="#00e6ee"/><rect x="2" y="16" width="24" height="5" fill="#00e6ee"/><rect x="0" y="22" width="28" height="7" fill="#00e6ee"/><path d="M2 30 H26 V35 Q26 37.5 23.5 37.5 H4.5 Q2 37.5 2 35 Z" fill="#00e6ee"/><rect x="3.5" y="10.5" width="1.1" height="3" fill="#1c3a3c"/><rect x="6.1" y="10.5" width="1.1" height="3" fill="#1c3a3c"/><rect x="8.7" y="10.5" width="1.1" height="3" fill="#1c3a3c"/><rect x="11.3" y="10.5" width="1.1" height="3" fill="#1c3a3c"/><rect x="13.9" y="10.5" width="1.1" height="3" fill="#1c3a3c"/><rect x="16.5" y="10.5" width="1.1" height="3" fill="#1c3a3c"/><rect x="19.1" y="10.5" width="1.1" height="3" fill="#1c3a3c"/><rect x="21.7" y="10.5" width="1.1" height="3" fill="#1c3a3c"/><rect x="24.3" y="10.5" width="1.1" height="3" fill="#1c3a3c"/><rect x="2.5" y="24" width="1.1" height="3" fill="#1c3a3c"/><rect x="5.1" y="24" width="1.1" height="3" fill="#1c3a3c"/><rect x="7.7" y="24" width="1.1" height="3" fill="#1c3a3c"/><rect x="10.3" y="24" width="1.1" height="3" fill="#1c3a3c"/><rect x="12.9" y="24" width="1.1" height="3" fill="#1c3a3c"/><rect x="15.5" y="24" width="1.1" height="3" fill="#1c3a3c"/><rect x="18.1" y="24" width="1.1" height="3" fill="#1c3a3c"/><rect x="20.7" y="24" width="1.1" height="3" fill="#1c3a3c"/><rect x="23.3" y="24" width="1.1" height="3" fill="#1c3a3c"/><rect x="25.9" y="24" width="1.1" height="3" fill="#1c3a3c"/></svg>
<div class="a" style="left:293px;top:975px;width:30px;height:29px;border:1px solid #787878;background:#2b2b2b;"><svg class="a" style="left:5px;top:6px;" width="18" height="16" viewBox="0 0 18 16"><path d="M1.5 0 V16" stroke="#ff7f00" stroke-width="2.2"/><path d="M16 0 L4 8 L16 16 Z" fill="#ff7f00"/></svg></div>
<div class="a" style="left:324px;top:975px;width:30px;height:29px;border:1px solid #787878;background:#2b2b2b;"><svg class="a" style="left:8px;top:6px;" width="12" height="16" viewBox="0 0 12 16"><path d="M12 0 L0 8 L12 16 Z" fill="#ff7f00"/></svg></div>
<div class="a" style="left:356px;top:975px;width:37px;height:29px;border:1px solid #787878;background:#ff7e0a;"><div class="t" style="left:0;top:5px;width:35px;text-align:center;font-size:15px;line-height:17px;letter-spacing:-0.5px;color:#f6f6f6">0.7X</div></div>
<div class="a" style="left:392px;top:975px;width:37px;height:29px;border:1px solid #787878;background:#2b2b2b;"><div class="t" style="left:0;top:5px;width:35px;text-align:center;font-size:13.5px;line-height:17px;letter-spacing:-0.5px;color:#f6f6f6">1X</div></div>
<div class="a" style="left:428px;top:975px;width:38px;height:29px;border:1px solid #787878;background:#2b2b2b;"><div class="t" style="left:0;top:5px;width:36px;text-align:center;font-size:13.5px;line-height:17px;letter-spacing:-0.5px;color:#f6f6f6">1.5X</div></div>
<div class="a" style="left:465px;top:975px;width:37px;height:29px;border:1px solid #787878;background:#2b2b2b;"><div class="t" style="left:0;top:5px;width:35px;text-align:center;font-size:13.5px;line-height:17px;letter-spacing:-0.5px;color:#f6f6f6">2X</div></div>
<div class="a" style="left:501px;top:975px;width:37px;height:29px;border:1px solid #787878;background:#2b2b2b;"><div class="t" style="left:0;top:5px;width:35px;text-align:center;font-size:13.5px;line-height:17px;letter-spacing:-0.5px;color:#f6f6f6">2.5X</div></div>
<div class="a" style="left:537px;top:975px;width:38px;height:29px;border:1px solid #787878;background:#2b2b2b;"><div class="t" style="left:0;top:5px;width:36px;text-align:center;font-size:13.5px;line-height:17px;letter-spacing:-0.5px;color:#f6f6f6">3X</div></div>
<div class="a" style="left:574px;top:975px;width:37px;height:29px;border:1px solid #787878;background:#2b2b2b;"><div class="t" style="left:0;top:5px;width:35px;text-align:center;font-size:13.5px;line-height:17px;letter-spacing:-0.5px;color:#f6f6f6">3.5X</div></div>
<div class="a" style="left:610px;top:975px;width:38px;height:29px;border:1px solid #787878;background:#2b2b2b;"><div class="t" style="left:0;top:5px;width:36px;text-align:center;font-size:13.5px;line-height:17px;letter-spacing:-0.5px;color:#f6f6f6">4X</div></div>
<div class="a" style="left:647px;top:975px;width:37px;height:29px;border:1px solid #787878;background:#2b2b2b;"><div class="t" style="left:0;top:5px;width:35px;text-align:center;font-size:13.5px;line-height:17px;letter-spacing:-0.5px;color:#f6f6f6">4.5X</div></div>
<div class="a" style="left:685px;top:975px;width:30px;height:29px;border:1px solid #787878;background:#2b2b2b;"><svg class="a" style="left:9px;top:6px;" width="12" height="16" viewBox="0 0 12 16"><path d="M0 0 L12 8 L0 16 Z" fill="#ff7f00"/></svg></div>
<div class="a" style="left:716px;top:975px;width:30px;height:29px;border:1px solid #787878;background:#2b2b2b;"><svg class="a" style="left:6px;top:6px;" width="18" height="16" viewBox="0 0 18 16"><path d="M0 0 L12 8 L0 16 Z" fill="#ff7f00"/><path d="M15 0 V16" stroke="#ff7f00" stroke-width="2.2"/></svg></div>
<div class="a" style="left:761px;top:775px;width:238px;height:239px;background:#9a9a9a"></div>
<svg class="a" style="left:761px;top:775px;" width="238" height="239" viewBox="0 0 238 239"><defs><filter id="nf" x="0" y="0" width="100%" height="100%"><feTurbulence type="fractalNoise" baseFrequency="0.09" numOctaves="2" seed="3" result="t"/><feColorMatrix type="matrix" values="0 0 0 0 0.61  0 0 0 0 0.61  0 0 0 0 0.61  0.9 0 0 0 -0.25"/></filter></defs><rect x="0" y="0" width="238" height="239" fill="#a3a3a3"/><rect x="0" y="0" width="238" height="239" fill="#808080" filter="url(#nf)" opacity="0.6"/></svg>
<svg class="a" style="left:870px;top:884px;" width="21" height="21" viewBox="0 0 21 21"><path d="M10.5 0 V21 M0 10.5 H21" stroke="#e01010" stroke-width="1"/></svg>
<div class="a" style="left:257px;top:1019px;width:747px;height:29px;background:#3d3d3d"></div>
<div class="a" style="left:669px;top:1028px;width:10px;height:10px;background:#19e045;border-radius:50%"></div>
<div class="t" style="left:691px;top:1025px;font-size:12.6px;line-height:17px;height:17px;color:#f2f2f2;">十字线:关</div>
<div class="a" style="left:749px;top:1022px;width:1px;height:24px;background:#2a2a2a"></div>
<div class="t" style="left:759px;top:1025px;font-size:12.6px;line-height:17px;height:17px;color:#f2f2f2;">色彩:黑白</div>
<div class="a" style="left:817px;top:1022px;width:1px;height:24px;background:#2a2a2a"></div>
<div class="t" style="left:826px;top:1025px;font-size:12.6px;line-height:17px;height:17px;color:#f2f2f2;">帧率: 45.5fps</div>
<div class="a" style="left:904px;top:1022px;width:1px;height:24px;background:#2a2a2a"></div>
<div class="t" style="left:931px;top:1024px;font-size:13.5px;line-height:17px;height:17px;color:#f2f2f2;">MCS</div>
<div class="a" style="left:989px;top:1031px;width:0;height:0;border-left:3.0px solid transparent;border-right:3.0px solid transparent;border-top:5px solid #e8e8e8"></div>
<div class="a" style="left:1010px;top:137px;width:932px;height:483px;background:#2e2e2e"></div>
<div class="a" style="left:1011px;top:149px;width:211px;height:440px;border:1px solid #454545"></div>
<div class="a" style="left:1019px;top:142px;width:20px;height:14px;background:#2e2e2e"></div>
<div class="t" style="left:1023px;top:141px;font-size:12px;line-height:16px;height:16px;color:#f0f0f0;">点</div>
<div class="a" style="left:1012px;top:213px;width:209px;height:1px;background:#454545"></div>
<div class="a" style="left:1012px;top:278px;width:209px;height:1px;background:#454545"></div>
<div class="a" style="left:1012px;top:343px;width:209px;height:1px;background:#454545"></div>
<div class="a" style="left:1012px;top:407px;width:209px;height:1px;background:#454545"></div>
<div class="a" style="left:1012px;top:472px;width:209px;height:1px;background:#454545"></div>
<div class="a" style="left:1012px;top:536px;width:209px;height:1px;background:#454545"></div>
<svg class="a" style="left:1020px;top:167px;" width="28" height="28" viewBox="0 0 28 28"><path d="M3 3 L25 25 M25 3 L3 25" stroke="#ff7f00" stroke-width="1.3" fill="none" /><circle cx="14" cy="14" r="2.2" fill="#00e6ee"/></svg>
<svg class="a" style="left:1061px;top:167px;" width="28" height="28" viewBox="0 0 28 28"><rect x="2.5" y="17.5" width="23.5" height="8" stroke="#bdbdbd" stroke-width="1" fill="none" /><path d="M4 17.5 L9 25.5 M8 17.5 L13 25.5 M12 17.5 L17 25.5 M16 17.5 L21 25.5 M20 17.5 L25 25.5" stroke="#bdbdbd" stroke-width="1" fill="none" /><path d="M14.5 4 V21" stroke="#00e6ee" stroke-width="1.3" fill="none" /><path d="M0 0 L-3.9000000000000004 -1.9500000000000002 L-3.9000000000000004 1.9500000000000002 Z" fill="#00e6ee" transform="translate(14.5 1.5) rotate(-90)"/><circle cx="14.5" cy="17.5" r="1.6" fill="#ff7f00"/></svg>
<svg class="a" style="left:1101px;top:167px;" width="28" height="28" viewBox="0 0 28 28"><path d="M14.5 2 V26 M3 13.5 H26" stroke="#00e6ee" stroke-width="1.4" fill="none" /><circle cx="14.5" cy="13.5" r="2.3" fill="#00e6ee"/></svg>
<svg class="a" style="left:1142px;top:232px;" width="28" height="28" viewBox="0 0 28 28"><path d="M4 24 L24 4" stroke="#ff7f00" stroke-width="1.3" fill="none" /><circle cx="4" cy="24" r="2" fill="#00e6ee"/><circle cx="14" cy="14" r="2" fill="#00e6ee"/><circle cx="24" cy="4" r="2" fill="#00e6ee"/></svg>
<svg class="a" style="left:1142px;top:296px;" width="28" height="28" viewBox="0 0 28 28"><path d="M10 2.5 C23 4 23 24 10 25.5 L10 22.5 C18.5 20 18.5 8 10 5.5 Z" stroke="#00e6ee" stroke-width="1.2" fill="none" /><path d="M10.5 4 C21 6 21 22 10.5 24" stroke="#ff7f00" stroke-width="1.2" fill="none" /></svg>
<svg class="a" style="left:1142px;top:360px;" width="28" height="28" viewBox="0 0 28 28"><path d="M24 3 L3 24.5 H26" stroke="#ff7f00" stroke-width="1.3" fill="none" /><path d="M10.5 17 C12.5 19 13.5 21.5 13.5 24.5" stroke="#00e6ee" stroke-width="1.2" fill="none" /><text x="15.5" y="22.5" font-family="Liberation Sans,sans-serif" font-size="9" fill="#00e6ee">θ</text></svg>
<svg class="a" style="left:1182px;top:361px;" width="28" height="28" viewBox="0 0 28 28"><circle cx="14" cy="14" r="12" stroke="#ff7f00" stroke-width="1.4" fill="none"/><path d="M8.5 19.5 L19.5 8.5" stroke="#00e6ee" stroke-width="1.5" fill="none" /><path d="M0 0 L-4.35 -2.175 L-4.35 2.175 Z" fill="#00e6ee" transform="translate(6.3 21.7) rotate(135)"/><path d="M0 0 L-4.35 -2.175 L-4.35 2.175 Z" fill="#00e6ee" transform="translate(21.7 6.3) rotate(-45)"/><circle cx="14" cy="14" r="2" fill="#ff7f00"/></svg>
<svg class="a" style="left:1142px;top:425px;" width="28" height="28" viewBox="0 0 28 28"><path d="M2.5 21 C3.5 5 24.5 5 25.5 21" stroke="#ff7f00" stroke-width="1.4" fill="none" /></svg>
<div class="t" style="left:1139px;top:464px;font-size:12px;line-height:16px;height:16px;color:#f0f0f0;background:#2e2e2e;">器</div>
<div class="a" style="left:1228px;top:137px;width:70px;height:27px;background:linear-gradient(#6c6c6c,#4b4b4b);border-top:1px solid #7a7a7a"></div>
<div class="t" style="left:1228px;top:143px;font-size:12.3px;line-height:17px;height:17px;color:#d4d4d4;width:69px;text-align:center;">当前任务</div>
<div class="a" style="left:1298px;top:137px;width:70px;height:27px;background:linear-gradient(#1a1a1a,#000 40%);border:1px solid #2a2a2a"></div>
<div class="t" style="left:1298px;top:143px;font-size:12.3px;line-height:17px;height:17px;color:#ffffff;width:70px;text-align:center;">当前尺寸</div>
<svg class="a" style="left:1375px;top:140px;" width="22" height="22" viewBox="0 0 22 22"><path d="M21.2 9.7 L21.2 12.3 L18.3 11.9 L16.9 15.5 L19.1 17.3 L17.3 19.1 L15.5 16.9 L11.9 18.3 L12.3 21.2 L9.7 21.2 L10.1 18.3 L6.5 16.9 L4.7 19.1 L2.9 17.3 L5.1 15.5 L3.7 11.9 L0.8 12.3 L0.8 9.7 L3.7 10.1 L5.1 6.5 L2.9 4.7 L4.7 2.9 L6.5 5.1 L10.1 3.7 L9.7 0.8 L12.3 0.8 L11.9 3.7 L15.5 5.1 L17.3 2.9 L19.1 4.7 L16.9 6.5 L18.3 10.1 Z M14 11 A3 3 0 1 0 8 11 A3 3 0 1 0 14 11 Z" fill="#f7c0a4" fill-rule="evenodd" stroke="#fdeee6" stroke-width="0.6"/></svg>
<div class="a" style="left:1228px;top:165px;width:333px;height:424px;border:1px solid #454545;background:#2b2b2b"></div>
<div class="a" style="left:1232px;top:189px;width:325px;height:20px;background:#272727"></div><div class="a" style="left:1232px;top:209px;width:325px;height:20px;background:#333333"></div><div class="a" style="left:1232px;top:229px;width:325px;height:21px;background:#272727"></div><div class="a" style="left:1232px;top:250px;width:325px;height:20px;background:#333333"></div><div class="a" style="left:1232px;top:270px;width:325px;height:20px;background:#272727"></div><div class="a" style="left:1232px;top:290px;width:325px;height:20px;background:#333333"></div><div class="a" style="left:1232px;top:310px;width:325px;height:20px;background:#272727"></div><div class="a" style="left:1232px;top:330px;width:325px;height:20px;background:#333333"></div><div class="a" style="left:1232px;top:350px;width:325px;height:21px;background:#272727"></div><div class="a" style="left:1232px;top:371px;width:325px;height:20px;background:#333333"></div><div class="a" style="left:1232px;top:391px;width:325px;height:20px;background:#272727"></div><div class="a" style="left:1232px;top:411px;width:325px;height:20px;background:#333333"></div><div class="a" style="left:1232px;top:431px;width:325px;height:20px;background:#272727"></div><div class="a" style="left:1232px;top:451px;width:325px;height:21px;background:#333333"></div><div class="a" style="left:1232px;top:472px;width:325px;height:20px;background:#272727"></div><div class="a" style="left:1232px;top:492px;width:325px;height:20px;background:#333333"></div><div class="a" style="left:1232px;top:512px;width:325px;height:20px;background:#272727"></div><div class="a" style="left:1232px;top:532px;width:325px;height:20px;background:#333333"></div><div class="a" style="left:1232px;top:552px;width:325px;height:20px;background:#272727"></div><div class="a" style="left:1232px;top:572px;width:325px;height:13px;background:#333333"></div>
<div class="a" style="left:1232px;top:169px;width:325px;height:20px;background:#4a4a4a"></div>
<div class="a" style="left:1260px;top:168px;width:1px;height:418px;background:#3f3f3f"></div>
<div class="a" style="left:1301px;top:168px;width:1px;height:418px;background:#3f3f3f"></div>
<div class="a" style="left:1402px;top:168px;width:1px;height:418px;background:#3f3f3f"></div>
<div class="a" style="left:1472px;top:168px;width:1px;height:418px;background:#3f3f3f"></div>
<div class="a" style="left:1538px;top:168px;width:1px;height:418px;background:#3f3f3f"></div>
<div class="cb" style="left:1237px;top:170px;width:18px;height:18px;"></div>
<div class="t" style="left:1261px;top:171px;font-size:12px;line-height:17px;height:17px;color:#f0f0f0;width:40px;text-align:center;font-family:'Liberation Mono','Noto Sans CJK SC',monospace;">ID</div>
<div class="t" style="left:1302px;top:171px;font-size:12.3px;line-height:17px;height:17px;color:#f0f0f0;width:100px;text-align:center;letter-spacing:1px;">名称</div>
<div class="t" style="left:1403px;top:171px;font-size:12.3px;line-height:17px;height:17px;color:#f0f0f0;width:69px;text-align:center;letter-spacing:1px;">坐标系</div>
<div class="t" style="left:1473px;top:171px;font-size:12.3px;line-height:17px;height:17px;color:#f0f0f0;width:65px;text-align:center;letter-spacing:1px;">测量模式</div>
<div class="a" style="left:1561px;top:165px;width:5px;height:424px;background:#333"></div>
<div class="a" style="left:1566px;top:137px;width:71px;height:27px;background:linear-gradient(#6c6c6c,#4b4b4b);border-top:1px solid #7a7a7a"></div>
<div class="t" style="left:1566px;top:143px;font-size:12.3px;line-height:17px;height:17px;color:#d8d8d8;width:71px;text-align:center;">特征属性</div>
<div class="a" style="left:1566px;top:165px;width:371px;height:222px;border:1px solid #454545;background:#2b2b2b"></div>
<div class="a" style="left:1571px;top:169px;width:361px;height:20px;background:#272727"></div><div class="a" style="left:1571px;top:189px;width:361px;height:20px;background:#353535"></div><div class="a" style="left:1571px;top:209px;width:361px;height:21px;background:#272727"></div><div class="a" style="left:1571px;top:230px;width:361px;height:20px;background:#353535"></div><div class="a" style="left:1571px;top:250px;width:361px;height:20px;background:#272727"></div><div class="a" style="left:1571px;top:270px;width:361px;height:20px;background:#353535"></div><div class="a" style="left:1571px;top:290px;width:361px;height:20px;background:#272727"></div><div class="a" style="left:1571px;top:310px;width:361px;height:21px;background:#353535"></div><div class="a" style="left:1571px;top:331px;width:361px;height:20px;background:#272727"></div><div class="a" style="left:1571px;top:351px;width:361px;height:20px;background:#353535"></div><div class="a" style="left:1571px;top:371px;width:361px;height:11px;background:#272727"></div>
<div class="a" style="left:1642px;top:168px;width:1px;height:215px;background:#3f3f3f"></div>
<div class="a" style="left:1794px;top:168px;width:1px;height:215px;background:#3f3f3f"></div>
<div class="a" style="left:1566px;top:390px;width:371px;height:199px;border:1px solid #454545;background:#2b2b2b"></div>
<div class="a" style="left:1571px;top:415px;width:361px;height:20px;background:#272727"></div><div class="a" style="left:1571px;top:435px;width:361px;height:20px;background:#333333"></div><div class="a" style="left:1571px;top:455px;width:361px;height:21px;background:#272727"></div><div class="a" style="left:1571px;top:476px;width:361px;height:20px;background:#333333"></div><div class="a" style="left:1571px;top:496px;width:361px;height:20px;background:#272727"></div><div class="a" style="left:1571px;top:516px;width:361px;height:20px;background:#333333"></div><div class="a" style="left:1571px;top:536px;width:361px;height:20px;background:#272727"></div><div class="a" style="left:1571px;top:556px;width:361px;height:21px;background:#333333"></div><div class="a" style="left:1571px;top:577px;width:361px;height:8px;background:#272727"></div>
<div class="a" style="left:1571px;top:395px;width:361px;height:20px;background:#4a4a4a"></div>
<div class="a" style="left:1652px;top:394px;width:1px;height:192px;background:#3f3f3f"></div>
<div class="a" style="left:1713px;top:394px;width:1px;height:192px;background:#3f3f3f"></div>
<div class="a" style="left:1774px;top:394px;width:1px;height:192px;background:#3f3f3f"></div>
<div class="a" style="left:1834px;top:394px;width:1px;height:192px;background:#3f3f3f"></div>
<div class="a" style="left:1895px;top:394px;width:1px;height:192px;background:#3f3f3f"></div>
<div class="t" style="left:1571px;top:397px;font-size:12.3px;line-height:17px;height:17px;color:#f0f0f0;width:81px;text-align:center;letter-spacing:1px;">属性</div>
<div class="t" style="left:1653px;top:397px;font-size:12.3px;line-height:17px;height:17px;color:#f0f0f0;width:60px;text-align:center;letter-spacing:1px;">测量值</div>
<div class="t" style="left:1714px;top:397px;font-size:12.3px;line-height:17px;height:17px;color:#f0f0f0;width:60px;text-align:center;letter-spacing:1px;">设计值</div>
<div class="t" style="left:1775px;top:397px;font-size:12.3px;line-height:17px;height:17px;color:#f0f0f0;width:59px;text-align:center;letter-spacing:1px;">上偏差</div>
<div class="t" style="left:1835px;top:397px;font-size:12.3px;line-height:17px;height:17px;color:#f0f0f0;width:60px;text-align:center;letter-spacing:1px;">下偏差</div>
<div class="a" style="left:1139px;top:596px;width:11px;height:24px;background:linear-gradient(#787878,#4e4e4e)"></div>
<div class="cb" style="left:1156px;top:599px;width:18px;height:18px;"></div>
<div class="t" style="left:1181px;top:600px;font-size:12.1px;line-height:17px;height:17px;color:#f2f2f2;">显示轮廓名称</div>
<div class="cb" style="left:1258px;top:599px;width:18px;height:18px;"><svg viewBox="0 0 16 16"><path d="M3.2 8.2 L6.6 11.8 L12.8 3.8" fill="none" stroke="#f4f4f4" stroke-width="2" stroke-linecap="square"/></svg></div>
<div class="t" style="left:1283px;top:600px;font-size:12.1px;line-height:17px;height:17px;color:#f2f2f2;">显示标注</div>
<div class="a" style="left:1010px;top:620px;width:928px;height:392px;background-color:#333333;background-image:linear-gradient(90deg,#4a4a4a 1px,transparent 1px),linear-gradient(#4a4a4a 1px,transparent 1px),linear-gradient(90deg,#3d3d3d 1px,transparent 1px),linear-gradient(#3d3d3d 1px,transparent 1px);background-size:101.1px 101.1px,101.1px 101.1px,20.22px 20.22px,20.22px 20.22px;background-position:60px 61px,60px 61px,60px 61px,60px 61px;"></div>
<div class="a" style="left:1010px;top:1018px;width:927px;height:30px;border:1px solid #555;background:#2f2f2f"></div>
<div class="t" style="left:1017px;top:1024px;font-size:13.8px;line-height:18px;height:18px;color:#f2f2f2;">准备就绪</div>
<div class="a" style="left:0px;top:1052px;width:1942px;height:4px;background:#242424"></div>
<div class="a" style="left:472px;top:201px;width:667px;height:444px;background:#41474b">
<div class="a" style="left:0px;top:0px;width:667px;height:29px;background:#1f2326"></div>
<div class="a" style="left:0px;top:29px;width:667px;height:1px;background:#0c0d0e"></div>
<div class="t" style="left:10px;top:6px;font-size:12.2px;line-height:17px;height:17px;color:#f4f4f4;">系统设置</div>
<svg class="a" style="left:645px;top:10px;" width="12" height="12" viewBox="0 0 12 12"><path d="M1 1 L11 11 M11 1 L1 11" stroke="#e8e8e8" stroke-width="1.7" fill="none"/></svg>
<div class="a" style="left:0px;top:29px;width:125px;height:415px;background:#3d4246"></div>
<div class="a" style="left:125px;top:29px;width:1px;height:415px;background:#555b60"></div>
<div class="a" style="left:1px;top:116px;width:121px;height:36px;background:#d17b08;border-radius:2px"></div>
<div class="t" style="left:31px;top:45px;font-size:12.6px;line-height:18px;height:18px;color:#f6f6f6;letter-spacing:3.6px;font-weight:400;">单位设置</div>
<div class="t" style="left:31px;top:85px;font-size:12.6px;line-height:18px;height:18px;color:#f6f6f6;letter-spacing:3.6px;font-weight:400;">字段设置</div>
<div class="t" style="left:31px;top:125px;font-size:12.6px;line-height:18px;height:18px;color:#f6f6f6;letter-spacing:3.6px;font-weight:400;">习惯行为</div>
<div class="t" style="left:31px;top:165px;font-size:12.6px;line-height:18px;height:18px;color:#f6f6f6;letter-spacing:3.6px;font-weight:400;">用户管理</div>
<div class="t" style="left:31px;top:205px;font-size:12.6px;line-height:18px;height:18px;color:#f6f6f6;letter-spacing:3.6px;font-weight:400;">评判设置</div>
<div class="t" style="left:31px;top:246px;font-size:12.6px;line-height:18px;height:18px;color:#f6f6f6;letter-spacing:3.6px;font-weight:400;">特征属性</div>
<div class="t" style="left:31px;top:285px;font-size:12.6px;line-height:18px;height:18px;color:#f6f6f6;letter-spacing:3.6px;font-weight:400;">其他设置</div>
<div class="bb" style="left:4px;top:413px;width:70px;height:24px;border-radius:4px;border-color:#566772;background:linear-gradient(#626064 0%,#4a484c 28%,#2e2c30 46%,#2a282c 75%,#353337 100%);"><div class="t" style="left:0;top:3px;width:68px;text-align:center;font-size:12.3px;line-height:17px;color:#f4f4f4">默认</div></div>
<div class="a" style="left:126px;top:383px;width:541px;height:1px;background:#5a6166"></div>
<div class="bb" style="left:552px;top:401px;width:96px;height:35px;border-radius:4px;border-color:#566772;background:linear-gradient(#626064 0%,#4a484c 28%,#2e2c30 46%,#2a282c 75%,#353337 100%);"><div class="t" style="left:0;top:8px;width:94px;text-align:center;font-size:12.3px;line-height:17px;color:#f4f4f4;font-weight:500">确 定</div></div>
<div class="fs" style="left:142px;top:50px;width:510px;height:78px;"></div><div class="a" style="left:153px;top:48px;width:29px;height:4px;background:#41474b"></div><div class="t" style="left:155px;top:40px;font-size:12.3px;line-height:17px;height:17px;color:#f4f4f4;">测量</div>
<div class="fs" style="left:142px;top:146px;width:510px;height:73px;"></div><div class="a" style="left:153px;top:144px;width:29px;height:4px;background:#41474b"></div><div class="t" style="left:155px;top:136px;font-size:12.3px;line-height:17px;height:17px;color:#f4f4f4;">高度</div>
<div class="fs" style="left:142px;top:236px;width:510px;height:49px;"></div><div class="a" style="left:153px;top:234px;width:53px;height:4px;background:#41474b"></div><div class="t" style="left:155px;top:226px;font-size:12.3px;line-height:17px;height:17px;color:#f4f4f4;">光源休眠</div>
<div class="fs" style="left:142px;top:301px;width:510px;height:70px;"></div><div class="a" style="left:153px;top:299px;width:31px;height:4px;background:#41474b"></div><div class="t" style="left:155px;top:291px;font-size:12.3px;line-height:17px;height:17px;color:#f4f4f4;">CNC</div>
<div class="cb" style="left:177px;top:66px;width:18px;height:18px;"></div>
<div class="t" style="left:202px;top:68px;font-size:12.1px;line-height:17px;height:17px;color:#f4f4f4;">测量结果NG时启动蜂鸣器</div>
<div class="cb" style="left:417px;top:66px;width:18px;height:18px;"></div>
<div class="t" style="left:443px;top:68px;font-size:12.1px;line-height:17px;height:17px;color:#f4f4f4;">开始测量时自动切换视频状态</div>
<div class="cb" style="left:177px;top:97px;width:18px;height:18px;"></div>
<div class="t" style="left:202px;top:99px;font-size:12.1px;line-height:17px;height:17px;color:#f4f4f4;">测量完自动打印票据</div>
<div class="bb" style="left:439px;top:93px;width:108px;height:28px;border-radius:4px;border-color:#566772;background:linear-gradient(#626064 0%,#4a484c 28%,#2e2c30 46%,#2a282c 75%,#353337 100%);"><div class="t" style="left:0;top:5px;width:106px;text-align:center;font-size:12.3px;line-height:17px;color:#f4f4f4">扫码枪使用设置</div></div>
<div class="t" style="left:157px;top:165px;font-size:12.1px;line-height:17px;height:17px;color:#f4f4f4;">测头类型</div>
<div class="rd on" style="left:217px;top:163px"></div>
<div class="t" style="left:242px;top:165px;font-size:12.1px;line-height:17px;height:17px;color:#f4f4f4;">激光测头</div>
<div class="rd" style="left:307px;top:163px"></div>
<div class="t" style="left:333px;top:165px;font-size:12.1px;line-height:17px;height:17px;color:#f4f4f4;">接触式测头</div>
<div class="rd" style="left:408px;top:163px"></div>
<div class="t" style="left:434px;top:165px;font-size:12.1px;line-height:17px;height:17px;color:#f4f4f4;">影像聚焦</div>
<div class="a" style="left:217px;top:189px;width:121px;height:23px;border:1px solid #6a7780;border-radius:3px;background:linear-gradient(#5d5d5f,#505052)"></div>
<div class="t" style="left:222px;top:193px;font-size:12.1px;line-height:17px;height:17px;color:#f4f4f4;">激光测头SZ</div>
<div class="a" style="left:316px;top:190px;width:21px;height:21px;border-radius:3px;background:linear-gradient(#4c4a4e 0%,#38363a 49%,#242226 51%,#2e2c30 100%);box-shadow:0 0 0 1px #2a2a2a"></div>
<div class="a" style="left:323px;top:198px;width:0;height:0;border-left:3.5px solid transparent;border-right:3.5px solid transparent;border-top:5px solid #e8e8e8"></div>
<div class="cb" style="left:349px;top:191px;width:18px;height:18px;"></div>
<div class="t" style="left:374px;top:193px;font-size:12.1px;line-height:17px;height:17px;color:#f4f4f4;">透明材质</div>
<div class="cb" style="left:177px;top:254px;width:18px;height:18px;"></div>
<div class="t" style="left:202px;top:256px;font-size:12.1px;line-height:17px;height:17px;color:#f4f4f4;">光源休眠</div>
<div class="a" style="left:268px;top:251px;width:45px;height:24px;border-radius:3px;background:linear-gradient(#58585a,#626264);border:1px solid #6a6a6a"></div>
<div class="t" style="left:274px;top:256px;font-size:12.3px;line-height:17px;height:17px;color:#f4f4f4;">300</div>
<div class="t" style="left:320px;top:256px;font-size:12.1px;line-height:17px;height:17px;color:#f4f4f4;">秒内软件无操作，仪器光源进入休眠</div>
<div class="t" style="left:157px;top:316px;font-size:12.1px;line-height:17px;height:17px;color:#f4f4f4;">手动处理</div>
<div class="cb" style="left:217px;top:315px;width:18px;height:18px;"><svg viewBox="0 0 16 16"><path d="M3.2 8.2 L6.6 11.8 L12.8 3.8" fill="none" stroke="#f4f4f4" stroke-width="2" stroke-linecap="square"/></svg></div>
<div class="t" style="left:242px;top:316px;font-size:12.1px;line-height:17px;height:17px;color:#f4f4f4;">测量失败转手动</div>
<div class="cb" style="left:347px;top:315px;width:18px;height:18px;"><svg viewBox="0 0 16 16"><path d="M3.2 8.2 L6.6 11.8 L12.8 3.8" fill="none" stroke="#f4f4f4" stroke-width="2" stroke-linecap="square"/></svg></div>
<div class="t" style="left:372px;top:316px;font-size:12.1px;line-height:17px;height:17px;color:#f4f4f4;">超差转手动</div>
<div class="t" style="left:157px;top:346px;font-size:12.1px;line-height:17px;height:17px;color:#f4f4f4;">测量移动</div>
<div class="cb" style="left:217px;top:344px;width:18px;height:18px;"></div>
<div class="t" style="left:242px;top:346px;font-size:12.1px;line-height:17px;height:17px;color:#f4f4f4;">同画面不移动测量</div>
<div class="a" style="left:140px;top:287px;width:313px;height:97px;border:4px solid #f5231b;border-radius:8px"></div>
<svg class="a" style="left:448px;top:314px;" width="120" height="36" viewBox="0 0 120 36"><path d="M5.9 11.7 L19.8 6.3 L17.2 10.6 L110.7 30.5 L15.5 16.5 L17.2 21.2 Z" fill="#f5231b"/></svg>
<div class="a" style="left:0px;top:0px;width:667px;height:444px;border:1px solid #4c606d"></div>
</div>

</div>
</body></html>
